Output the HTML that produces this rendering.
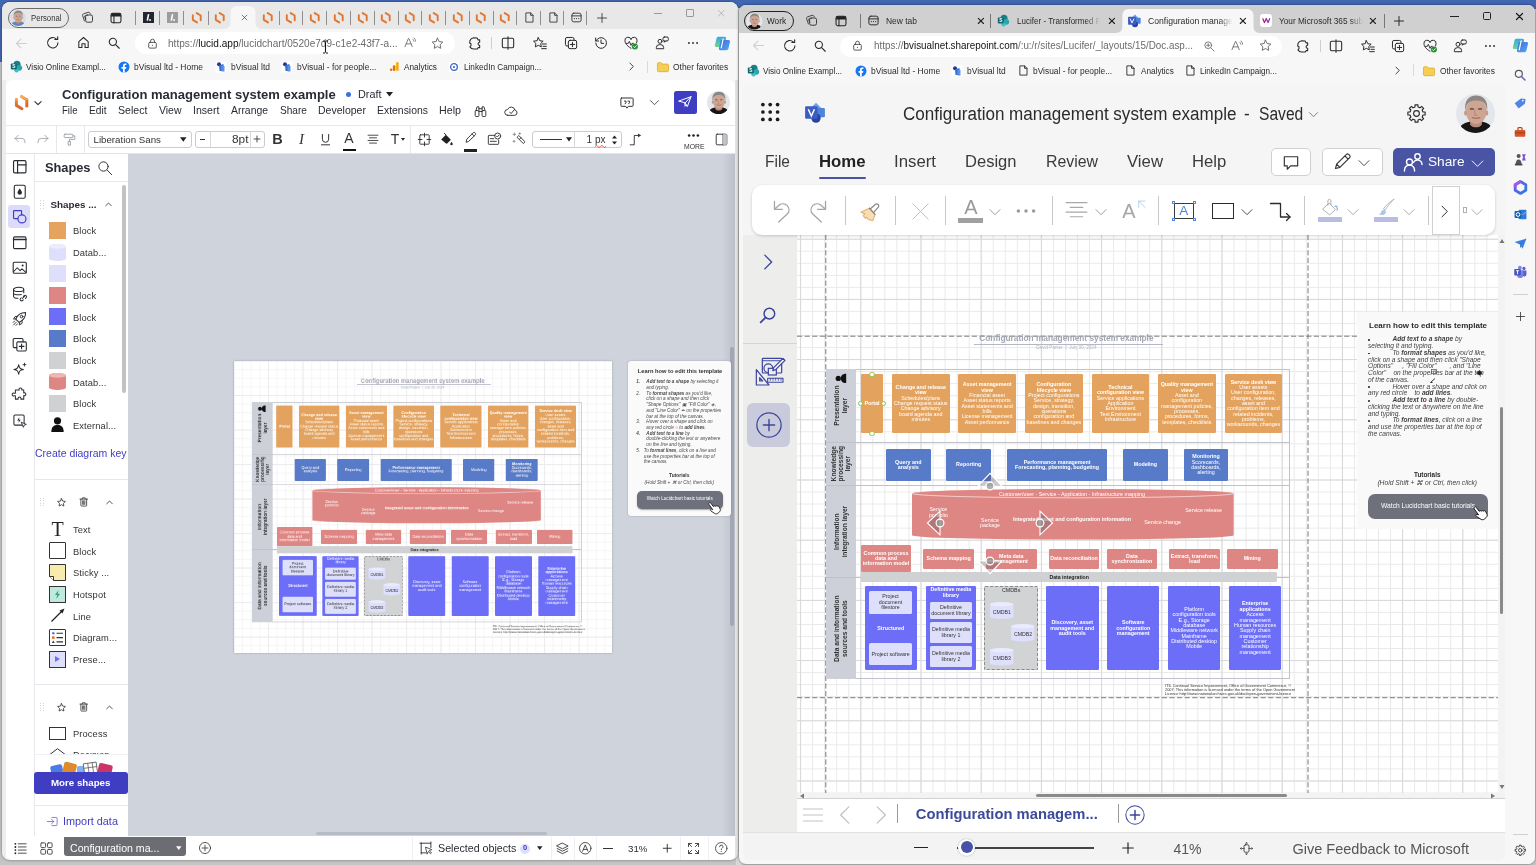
<!DOCTYPE html><html><head><meta charset="utf-8"><title>Configuration management system example</title><style>

html,body{margin:0;padding:0;}
body{width:1536px;height:865px;overflow:hidden;position:relative;background:#C5C5C5;will-change:transform;font-family:"Liberation Sans",sans-serif;}
div,svg,span.a{position:absolute;box-sizing:border-box;}
svg{overflow:visible;}
.w{position:absolute;overflow:hidden;}

</style></head><body>
<div style="left:0.00px;top:0.00px;width:1536.00px;height:9.00px;background:#4267B2;"></div>
<div style="left:0.00px;top:0.00px;width:3.00px;height:62.00px;background:#4267B2;"></div>
<div style="left:736.00px;top:8.00px;width:6.00px;height:860.00px;background:#D9D9D9;"></div>
<div class="w" style="left:2px;top:1.5px;width:736px;height:858.5px;border-radius:8px;background:#F7F7F7;box-shadow:0 0 3px rgba(0,0,0,.45);"><div style="left:-2px;top:-1.5px;width:1536px;height:865px;"><div style="left:0.00px;top:0.00px;width:740.00px;height:29.00px;background:#E8E8E8;"></div><div style="left:0.00px;top:29.00px;width:740.00px;height:51.00px;background:#F7F7F7;"></div><div class="w" style="left:6px;top:80px;width:729px;height:780px;border-radius:7px 7px 7px 7px;background:#fff;"><div style="left:-6px;top:-80px;width:1536px;height:865px;"><div style="left:128.00px;top:153.00px;width:610.00px;height:683.00px;background:#CFD3DC;"></div><div style="left:234.00px;top:360.50px;width:377.50px;height:292.00px;background:#fff;box-shadow:0 0 2px rgba(0,0,0,.25);background-image:linear-gradient(#ECECEE 1px,transparent 1px),linear-gradient(90deg,#ECECEE 1px,transparent 1px),linear-gradient(#F5F5F6 1px,transparent 1px),linear-gradient(90deg,#F5F5F6 1px,transparent 1px);background-size:34.52px 34.52px,34.52px 34.52px,8.63px 8.63px,8.63px 8.63px;background-position:-0.5px -0.5px;"></div><div style="left:251.9px;top:401.5px;width:0;height:0;transform:scale(0.7105);transform-origin:0 0;filter:blur(0.3px);"><div style="left:0;top:0;width:463.55px;height:309.90px;border:0.8px solid #C0C1CB;box-sizing:border-box;"></div><div style="left:0.00px;top:0.00px;width:29.35px;height:309.90px;background:#CDD0D8;"></div><div style="left:0.00px;top:72.50px;width:463.55px;height:0.80px;background:#C0C1CB;"></div><div style="left:0.00px;top:115.60px;width:463.55px;height:0.80px;background:#C0C1CB;"></div><div style="left:0.00px;top:207.40px;width:463.55px;height:0.80px;background:#C0C1CB;"></div><div style="left:-21.78px;top:21.78px;width:72.90px;height:29.35px;transform:rotate(-90deg);display:flex;align-items:center;justify-content:center;text-align:center;font-size:6.65px;line-height:7.2px;font-weight:bold;color:#333;">Presentation<br>layer</div><div style="left:-6.87px;top:79.78px;width:43.10px;height:29.35px;transform:rotate(-90deg);display:flex;align-items:center;justify-content:center;text-align:center;font-size:6.65px;line-height:7.2px;font-weight:bold;color:#333;">Knowledge<br>processing<br>layer</div><div style="left:-31.23px;top:147.23px;width:91.80px;height:29.35px;transform:rotate(-90deg);display:flex;align-items:center;justify-content:center;text-align:center;font-size:6.65px;line-height:7.2px;font-weight:bold;color:#333;">Information<br>integration layer</div><div style="left:-36.37px;top:244.18px;width:102.10px;height:29.35px;transform:rotate(-90deg);display:flex;align-items:center;justify-content:center;text-align:center;font-size:6.65px;line-height:7.2px;font-weight:bold;color:#333;">Data and information<br>sources and tools</div><svg style="left:9.35px;top:3.80px" width="9.6" height="10.8" viewBox="0 0 8 9"><g transform="rotate(-90 4 4.5)"><circle cx="4" cy="2.4" r="2.2" fill="#111"/><path d="M0.2,9 C0.2,5.5 2,4.6 4,4.6 C6,4.6 7.8,5.5 7.8,9 Z" fill="#111"/></g></svg><div style="left:34.35px;top:5.00px;width:22.70px;height:58.70px;background:#E3A35F;border-radius:1.2px;display:flex;flex-direction:column;justify-content:center;align-items:center;text-align:center;font-size:5.33px;line-height:5.36px;color:#fff;box-sizing:border-box;padding:0 0.5px;"><div style="position:static;font-weight:bold;">Portal</div></div><div style="left:65.65px;top:5.00px;width:57.70px;height:58.70px;background:#E3A35F;border-radius:1.2px;display:flex;flex-direction:column;justify-content:center;align-items:center;text-align:center;font-size:5.33px;line-height:5.36px;color:#fff;box-sizing:border-box;padding:0 0.5px;"><div style="position:static;font-weight:bold;">Change and release</div><div style="position:static;font-weight:bold;">view</div><div style="position:static;">Schedules/plans</div><div style="position:static;">Change request status</div><div style="position:static;">Change advisory</div><div style="position:static;">board agenda and</div><div style="position:static;">minutes</div></div><div style="left:132.05px;top:5.00px;width:57.70px;height:58.70px;background:#E3A35F;border-radius:1.2px;display:flex;flex-direction:column;justify-content:center;align-items:center;text-align:center;font-size:5.33px;line-height:5.36px;color:#fff;box-sizing:border-box;padding:0 0.5px;"><div style="position:static;font-weight:bold;">Asset management</div><div style="position:static;font-weight:bold;">view</div><div style="position:static;">Financial asset</div><div style="position:static;">Asset status reports</div><div style="position:static;">Asset statements and</div><div style="position:static;">bills</div><div style="position:static;">License management</div><div style="position:static;">Asset performance</div></div><div style="left:198.75px;top:5.00px;width:57.70px;height:58.70px;background:#E3A35F;border-radius:1.2px;display:flex;flex-direction:column;justify-content:center;align-items:center;text-align:center;font-size:5.33px;line-height:5.36px;color:#fff;box-sizing:border-box;padding:0 0.5px;"><div style="position:static;font-weight:bold;">Configuration</div><div style="position:static;font-weight:bold;">lifecycle view</div><div style="position:static;">Project configurations</div><div style="position:static;">Service, strategy,</div><div style="position:static;">design, transition,</div><div style="position:static;">operations</div><div style="position:static;">configuration and</div><div style="position:static;">baselines and changes</div></div><div style="left:265.35px;top:5.00px;width:57.70px;height:58.70px;background:#E3A35F;border-radius:1.2px;display:flex;flex-direction:column;justify-content:center;align-items:center;text-align:center;font-size:5.33px;line-height:5.36px;color:#fff;box-sizing:border-box;padding:0 0.5px;"><div style="position:static;font-weight:bold;">Technical</div><div style="position:static;font-weight:bold;">configuration view</div><div style="position:static;">Service applications</div><div style="position:static;">Application</div><div style="position:static;">Environment</div><div style="position:static;">Test Environment</div><div style="position:static;">Infrastructure</div></div><div style="left:331.75px;top:5.00px;width:57.70px;height:58.70px;background:#E3A35F;border-radius:1.2px;display:flex;flex-direction:column;justify-content:center;align-items:center;text-align:center;font-size:5.33px;line-height:5.36px;color:#fff;box-sizing:border-box;padding:0 0.5px;"><div style="position:static;font-weight:bold;">Quality management</div><div style="position:static;font-weight:bold;">view</div><div style="position:static;">Asset and</div><div style="position:static;">configuration</div><div style="position:static;">management policies,</div><div style="position:static;">processes,</div><div style="position:static;">procedures, forms,</div><div style="position:static;">templates, checklists</div></div><div style="left:398.35px;top:5.00px;width:57.70px;height:58.70px;background:#E3A35F;border-radius:1.2px;display:flex;flex-direction:column;justify-content:center;align-items:center;text-align:center;font-size:5.33px;line-height:5.36px;color:#fff;box-sizing:border-box;padding:0 0.5px;"><div style="position:static;font-weight:bold;">Service desk view</div><div style="position:static;">User assets</div><div style="position:static;">User configuration,</div><div style="position:static;">changes, releases,</div><div style="position:static;">asset and</div><div style="position:static;">configuration item and</div><div style="position:static;">related incidents,</div><div style="position:static;">problems,</div><div style="position:static;">workarounds, changes</div></div><div style="left:59.75px;top:79.60px;width:44.60px;height:31.80px;background:#577AC9;border-radius:1.2px;display:flex;flex-direction:column;justify-content:center;align-items:center;text-align:center;font-size:5.33px;line-height:5.36px;color:#fff;box-sizing:border-box;padding:0 0.5px;"><div style="position:static;">Query and</div><div style="position:static;">analysis</div></div><div style="left:120.05px;top:79.60px;width:44.80px;height:31.80px;background:#577AC9;border-radius:1.2px;display:flex;flex-direction:column;justify-content:center;align-items:center;text-align:center;font-size:5.33px;line-height:5.36px;color:#fff;box-sizing:border-box;padding:0 0.5px;"><div style="position:static;">Reporting</div></div><div style="left:180.75px;top:79.60px;width:100.20px;height:31.80px;background:#577AC9;border-radius:1.2px;display:flex;flex-direction:column;justify-content:center;align-items:center;text-align:center;font-size:5.33px;line-height:5.36px;color:#fff;box-sizing:border-box;padding:0 0.5px;"><div style="position:static;font-weight:bold;">Performance management</div><div style="position:static;">Forecasting, planning, budgeting</div></div><div style="left:296.85px;top:79.60px;width:44.60px;height:31.80px;background:#577AC9;border-radius:1.2px;display:flex;flex-direction:column;justify-content:center;align-items:center;text-align:center;font-size:5.33px;line-height:5.36px;color:#fff;box-sizing:border-box;padding:0 0.5px;"><div style="position:static;">Modeling</div></div><div style="left:357.45px;top:79.60px;width:44.60px;height:31.80px;background:#577AC9;border-radius:1.2px;display:flex;flex-direction:column;justify-content:center;align-items:center;text-align:center;font-size:5.33px;line-height:5.36px;color:#fff;box-sizing:border-box;padding:0 0.5px;"><div style="position:static;font-weight:bold;">Monitoring</div><div style="position:static;">Scorecards,</div><div style="position:static;">dashboards,</div><div style="position:static;">alerting</div></div><svg style="left:85.45px;top:119.70px" width="321.70" height="50.60" viewBox="0 0 321.70 50.60"><path d="M0,4.4 A160.85000000000002,4.4 0 0 1 321.70000000000005,4.4 L321.70000000000005,46.200000000000024 A160.85000000000002,4.4 0 0 1 0,46.200000000000024 Z" fill="#DE8683"/><path d="M0,4.4 A160.85000000000002,4.4 0 0 0 321.70000000000005,4.4" fill="none" stroke="#F7E1E0" stroke-width="0.8"/></svg><div style="left:145.75px;top:122.20px;width:200px;white-space:nowrap;text-align:center;font-size:5.33px;line-height:5.4px;color:#fff;">Customer/user - Service - Application - Infrastructure mapping</div><div style="left:12.15px;top:138.00px;width:200px;white-space:nowrap;text-align:center;font-size:5.33px;line-height:5.4px;color:#fff;">Service<br>portfolio</div><div style="left:63.75px;top:148.60px;width:200px;white-space:nowrap;text-align:center;font-size:5.33px;line-height:5.4px;color:#fff;">Service<br>package</div><div style="left:145.75px;top:147.40px;width:200px;white-space:nowrap;text-align:center;font-size:5.33px;line-height:5.4px;color:#fff;font-weight:bold;">Integrated asset and configuration information</div><div style="left:277.25px;top:138.50px;width:200px;white-space:nowrap;text-align:center;font-size:5.33px;line-height:5.4px;color:#fff;">Service release</div><div style="left:236.25px;top:150.90px;width:200px;white-space:nowrap;text-align:center;font-size:5.33px;line-height:5.4px;color:#fff;">Service change</div><div style="left:34.65px;top:175.60px;width:50.30px;height:27.40px;background:#DE8683;border-radius:1.2px;display:flex;flex-direction:column;justify-content:center;align-items:center;text-align:center;font-size:5.33px;line-height:5.36px;color:#fff;box-sizing:border-box;padding:0 0.5px;"><div style="position:static;">Common process</div><div style="position:static;">data and</div><div style="position:static;">information model</div></div><div style="left:96.85px;top:179.60px;width:51.10px;height:20.20px;background:#DE8683;border-radius:1.2px;display:flex;flex-direction:column;justify-content:center;align-items:center;text-align:center;font-size:5.33px;line-height:5.36px;color:#fff;box-sizing:border-box;padding:0 0.5px;"><div style="position:static;">Schema mapping</div></div><div style="left:159.65px;top:179.60px;width:50.80px;height:20.20px;background:#DE8683;border-radius:1.2px;display:flex;flex-direction:column;justify-content:center;align-items:center;text-align:center;font-size:5.33px;line-height:5.36px;color:#fff;box-sizing:border-box;padding:0 0.5px;"><div style="position:static;">Meta data</div><div style="position:static;">management</div></div><div style="left:222.45px;top:179.60px;width:50.60px;height:20.20px;background:#DE8683;border-radius:1.2px;display:flex;flex-direction:column;justify-content:center;align-items:center;text-align:center;font-size:5.33px;line-height:5.36px;color:#fff;box-sizing:border-box;padding:0 0.5px;"><div style="position:static;">Data reconciliation</div></div><div style="left:280.25px;top:179.60px;width:50.80px;height:20.20px;background:#DE8683;border-radius:1.2px;display:flex;flex-direction:column;justify-content:center;align-items:center;text-align:center;font-size:5.33px;line-height:5.36px;color:#fff;box-sizing:border-box;padding:0 0.5px;"><div style="position:static;">Data</div><div style="position:static;">synchronization</div></div><div style="left:342.75px;top:179.60px;width:51.00px;height:20.20px;background:#DE8683;border-radius:1.2px;display:flex;flex-direction:column;justify-content:center;align-items:center;text-align:center;font-size:5.33px;line-height:5.36px;color:#fff;box-sizing:border-box;padding:0 0.5px;"><div style="position:static;">Extract, transform,</div><div style="position:static;">load</div></div><div style="left:400.75px;top:179.60px;width:50.50px;height:20.20px;background:#DE8683;border-radius:1.2px;display:flex;flex-direction:column;justify-content:center;align-items:center;text-align:center;font-size:5.33px;line-height:5.36px;color:#fff;box-sizing:border-box;padding:0 0.5px;"><div style="position:static;">Mining</div></div><div style="left:34.65px;top:203.00px;width:416.60px;height:9.80px;background:#D0D1D3;border-radius:1.2px;display:flex;flex-direction:column;justify-content:center;align-items:center;text-align:center;font-size:5.2px;line-height:6px;color:#222;box-sizing:border-box;padding:0 0.5px;"><div style="position:static;font-weight:bold;">Data integration</div></div><div style="left:38.35px;top:217.10px;width:52.40px;height:83.50px;background:#6C6EF7;border-radius:1.2px;display:flex;flex-direction:column;justify-content:center;align-items:center;text-align:center;font-size:5.33px;line-height:5.36px;color:#fff;box-sizing:border-box;padding:0 0.5px;"><div style="position:static;font-weight:bold;">Structured</div></div><div style="left:42.75px;top:221.60px;width:43.00px;height:22.60px;background:#DEDFFB;border-radius:1.5px;display:flex;flex-direction:column;justify-content:center;align-items:center;text-align:center;font-size:5.33px;line-height:5.36px;color:#333;box-sizing:border-box;padding:0 0.5px;"><div style="position:static;">Project</div><div style="position:static;">document</div><div style="position:static;">filestore</div></div><div style="left:42.75px;top:273.60px;width:43.00px;height:22.50px;background:#DEDFFB;border-radius:1.5px;display:flex;flex-direction:column;justify-content:center;align-items:center;text-align:center;font-size:5.33px;line-height:5.36px;color:#333;box-sizing:border-box;padding:0 0.5px;"><div style="position:static;">Project software</div></div><div style="left:99.25px;top:217.10px;width:50.80px;height:83.50px;background:#6C6EF7;border-radius:1.2px;display:flex;flex-direction:column;justify-content:center;align-items:center;text-align:center;font-size:5.33px;line-height:5.36px;color:#fff;box-sizing:border-box;padding:0 0.5px;justify-content:flex-start;padding-top:0.8px;"><div style="position:static;">Definitive media</div><div style="position:static;">library</div></div><div style="left:103.25px;top:233.00px;width:42.80px;height:16.60px;background:#DEDFFB;border-radius:1.5px;display:flex;flex-direction:column;justify-content:center;align-items:center;text-align:center;font-size:5.33px;line-height:5.36px;color:#333;box-sizing:border-box;padding:0 0.5px;"><div style="position:static;">Definitive</div><div style="position:static;">document library</div></div><div style="left:103.25px;top:252.60px;width:42.80px;height:21.40px;background:#DEDFFB;border-radius:1.5px;display:flex;flex-direction:column;justify-content:center;align-items:center;text-align:center;font-size:5.33px;line-height:5.36px;color:#333;box-sizing:border-box;padding:0 0.5px;"><div style="position:static;">Definitive media</div><div style="position:static;">library 1</div></div><div style="left:103.25px;top:276.60px;width:42.80px;height:21.30px;background:#DEDFFB;border-radius:1.5px;display:flex;flex-direction:column;justify-content:center;align-items:center;text-align:center;font-size:5.33px;line-height:5.36px;color:#333;box-sizing:border-box;padding:0 0.5px;"><div style="position:static;">Definitive media</div><div style="position:static;">library 2</div></div><div style="left:158.05px;top:217.10px;width:53.70px;height:83.50px;background:#D2D3D5;border-radius:1.2px;display:flex;flex-direction:column;justify-content:center;align-items:center;text-align:center;font-size:5.33px;line-height:5.36px;color:#333;box-sizing:border-box;padding:0 0.5px;justify-content:flex-start;padding-top:0.8px;border:0.7px dashed #8a8a8a;"><div style="position:static;">CMDBs</div></div><svg style="left:163.75px;top:232.60px" width="23.50" height="17.00" viewBox="0 0 23.50 17.00"><path d="M0,2.2 A11.75,2.2 0 0 1 23.5,2.2 L23.5,14.8 A11.75,2.2 0 0 1 0,14.8 Z" fill="#DEDFFB"/><ellipse cx="11.75" cy="2.2" rx="11.75" ry="2.2" fill="#EBEBFD"/></svg><div style="left:163.75px;top:234.10px;width:23.50px;height:17.00px;display:flex;align-items:center;justify-content:center;font-size:5.2px;color:#333;">CMDB1</div><svg style="left:185.15px;top:254.60px" width="23.40" height="17.50" viewBox="0 0 23.40 17.50"><path d="M0,2.2 A11.699999999999989,2.2 0 0 1 23.399999999999977,2.2 L23.399999999999977,15.3 A11.699999999999989,2.2 0 0 1 0,15.3 Z" fill="#DEDFFB"/><ellipse cx="11.699999999999989" cy="2.2" rx="11.699999999999989" ry="2.2" fill="#EBEBFD"/></svg><div style="left:185.15px;top:256.10px;width:23.40px;height:17.50px;display:flex;align-items:center;justify-content:center;font-size:5.2px;color:#333;">CMDB2</div><svg style="left:163.75px;top:278.60px" width="23.50" height="17.50" viewBox="0 0 23.50 17.50"><path d="M0,2.2 A11.75,2.2 0 0 1 23.5,2.2 L23.5,15.3 A11.75,2.2 0 0 1 0,15.3 Z" fill="#DEDFFB"/><ellipse cx="11.75" cy="2.2" rx="11.75" ry="2.2" fill="#EBEBFD"/></svg><div style="left:163.75px;top:280.10px;width:23.50px;height:17.50px;display:flex;align-items:center;justify-content:center;font-size:5.2px;color:#333;">CMDB3</div><div style="left:219.75px;top:217.10px;width:52.50px;height:83.50px;background:#6C6EF7;border-radius:1.2px;display:flex;flex-direction:column;justify-content:center;align-items:center;text-align:center;font-size:5.33px;line-height:5.36px;color:#fff;box-sizing:border-box;padding:0 0.5px;"><div style="position:static;">Discovery, asset</div><div style="position:static;">management and</div><div style="position:static;">audit tools</div></div><div style="left:280.75px;top:217.10px;width:52.40px;height:83.50px;background:#6C6EF7;border-radius:1.2px;display:flex;flex-direction:column;justify-content:center;align-items:center;text-align:center;font-size:5.33px;line-height:5.36px;color:#fff;box-sizing:border-box;padding:0 0.5px;"><div style="position:static;">Software</div><div style="position:static;">configuration</div><div style="position:static;">management</div></div><div style="left:341.75px;top:217.10px;width:52.30px;height:83.50px;background:#6C6EF7;border-radius:1.2px;display:flex;flex-direction:column;justify-content:center;align-items:center;text-align:center;font-size:5.33px;line-height:5.36px;color:#fff;box-sizing:border-box;padding:0 0.5px;"><div style="position:static;">Platform</div><div style="position:static;">configuration tools</div><div style="position:static;">E.g., Storage</div><div style="position:static;">database</div><div style="position:static;">Middleware network</div><div style="position:static;">Mainframe</div><div style="position:static;">Distributed desktop</div><div style="position:static;">Mobile</div></div><div style="left:402.55px;top:217.10px;width:52.70px;height:83.50px;background:#6C6EF7;border-radius:1.2px;display:flex;flex-direction:column;justify-content:center;align-items:center;text-align:center;font-size:5.33px;line-height:5.36px;color:#fff;box-sizing:border-box;padding:0 0.5px;"><div style="position:static;font-weight:bold;">Enterprise</div><div style="position:static;font-weight:bold;">applications</div><div style="position:static;">Access</div><div style="position:static;">management</div><div style="position:static;">Human resources</div><div style="position:static;">Supply chain</div><div style="position:static;">management</div><div style="position:static;">Customer</div><div style="position:static;">relationship</div><div style="position:static;">management</div></div><div style="left:338.75px;top:314.20px;font-size:3.9px;line-height:4.1px;color:#333;white-space:nowrap;">ITIL Continual Service Improvement, Office of Government Commerce, &copy;<br>2007. This information is licensed under the terms of the Open Government<br>Licence http://www.nationalarchives.gov.uk/doc/open-government-licence</div><div style="left:140.15px;top:-34.90px;width:200px;text-align:center;font-size:8.3px;line-height:10px;font-weight:bold;color:#A3A6B3;white-space:nowrap;">Configuration management system example</div><div style="left:147.65px;top:-25.30px;width:188.80px;height:0.80px;background:#B4B7C4;"></div><div style="left:140.15px;top:-23.00px;width:200px;text-align:center;font-size:4.6px;line-height:5px;color:#B3B6C0;white-space:nowrap;">David Parker &nbsp;|&nbsp; July 30, 2024</div></div><div style="left:722.00px;top:154.00px;width:13.00px;height:682.00px;background:linear-gradient(90deg,rgba(120,125,140,0),rgba(120,125,140,.22));"></div><div style="left:730.20px;top:347.00px;width:4.20px;height:279.00px;background:#A3A7B3;border-radius:2.1px;"></div><div style="left:316.00px;top:831.80px;width:231.00px;height:3.00px;background:#B7BBC5;border-radius:1.5px;"></div><div style="left:628.00px;top:360.50px;width:102.50px;height:155.50px;background:#FAFAFA;border-radius:3px;box-shadow:0 0 2px rgba(0,0,0,.25);"></div><div style="left:6.00px;top:125.00px;width:729.00px;height:1.00px;background:#E6E8EC;"></div><div style="left:6.00px;top:153.00px;width:729.00px;height:1.00px;background:#E1E4EA;"></div><div style="left:6.00px;top:154.00px;width:28.00px;height:682.00px;background:#fff;"></div><div style="left:34.00px;top:154.00px;width:94.00px;height:682.00px;background:#fff;"></div><div style="left:34.00px;top:154.00px;width:1.00px;height:682.00px;background:#E6E8EC;"></div><div style="left:6.00px;top:836.00px;width:729.00px;height:24.00px;background:#fff;"></div><svg style="left:14.40px;top:95.10px;" width="15.2" height="15.2" viewBox="0 0 24 24"><defs><linearGradient id="lg1" x1="0" y1="0" x2="0" y2="1"><stop offset="0" stop-color="#F2A652"/><stop offset="0.35" stop-color="#E27A30"/><stop offset="1" stop-color="#D8672A"/></linearGradient></defs><path d="M3.8,6.8V16.4L12.5,21.7" fill="none" stroke="url(#lg1)" stroke-width="4.8" stroke-linecap="round" stroke-linejoin="round"/><path d="M11.9,2.3L20.25,7.4V17.3" fill="none" stroke="url(#lg1)" stroke-width="4.8" stroke-linecap="round" stroke-linejoin="round"/><path d="M11.9,2.3L20.25,7.4" fill="none" stroke="#F4B466" stroke-width="2" stroke-linecap="round"/></svg><svg style="left:32.60px;top:98.00px;" width="10" height="10" viewBox="0 0 24 24"><path d="M4.5,8.5L12,16l7.5-7.5" fill="none" stroke="#2b2b2b" stroke-width="2.5" stroke-linecap="round" stroke-linejoin="round"/></svg><div style="left:62.00px;top:86.80px;font-size:13.04px;line-height:15.00px;color:#282C33;white-space:nowrap;font-weight:bold;">Configuration management system example</div><div style="left:345.50px;top:91.50px;width:5.50px;height:5.50px;background:#3C6FD9;border-radius:50%;"></div><div style="left:357.50px;top:89.02px;font-size:10.40px;line-height:11.96px;color:#282C33;white-space:nowrap;transform:scaleX(1.0427);transform-origin:0 50%;">Draft</div><svg style="left:385.5px;top:92px" width="7" height="5" viewBox="0 0 7 5"><path d="M0,0H7L3.5,4.6Z" fill="#222"/></svg><div style="left:62.00px;top:105.32px;font-size:10.40px;line-height:11.96px;color:#282C33;white-space:nowrap;transform:scaleX(0.9249);transform-origin:0 50%;">File</div><div style="left:89.00px;top:105.32px;font-size:10.40px;line-height:11.96px;color:#282C33;white-space:nowrap;transform:scaleX(0.9765);transform-origin:0 50%;">Edit</div><div style="left:118.00px;top:105.32px;font-size:10.40px;line-height:11.96px;color:#282C33;white-space:nowrap;transform:scaleX(1.0206);transform-origin:0 50%;">Select</div><div style="left:159.00px;top:105.32px;font-size:10.40px;line-height:11.96px;color:#282C33;white-space:nowrap;transform:scaleX(1.0065);transform-origin:0 50%;">View</div><div style="left:192.50px;top:105.32px;font-size:10.40px;line-height:11.96px;color:#282C33;white-space:nowrap;transform:scaleX(1.0188);transform-origin:0 50%;">Insert</div><div style="left:231.00px;top:105.32px;font-size:10.40px;line-height:11.96px;color:#282C33;white-space:nowrap;transform:scaleX(1.0000);transform-origin:0 50%;">Arrange</div><div style="left:279.50px;top:105.32px;font-size:10.40px;line-height:11.96px;color:#282C33;white-space:nowrap;transform:scaleX(0.9729);transform-origin:0 50%;">Share</div><div style="left:317.50px;top:105.32px;font-size:10.40px;line-height:11.96px;color:#282C33;white-space:nowrap;transform:scaleX(1.0125);transform-origin:0 50%;">Developer</div><div style="left:376.50px;top:105.32px;font-size:10.40px;line-height:11.96px;color:#282C33;white-space:nowrap;transform:scaleX(1.0025);transform-origin:0 50%;">Extensions</div><div style="left:438.50px;top:105.32px;font-size:10.40px;line-height:11.96px;color:#282C33;white-space:nowrap;transform:scaleX(1.0285);transform-origin:0 50%;">Help</div><svg style="left:472.50px;top:103.50px;" width="15" height="15" viewBox="0 0 24 24"><path d="M5,9.5L6.5,4.5h3v6M19,9.5L17.5,4.5h-3v6M9.5,7.5h5M9.5,12h5" fill="none" stroke="#333" stroke-width="1.5" stroke-linecap="round" stroke-linejoin="round"/><rect x="3.5" y="10.5" width="6" height="9.5" rx="1.5" fill="none" stroke="#333" stroke-width="1.5" stroke-linecap="round" stroke-linejoin="round"/><rect x="14.5" y="10.5" width="6" height="9.5" rx="1.5" fill="none" stroke="#333" stroke-width="1.5" stroke-linecap="round" stroke-linejoin="round"/></svg><svg style="left:502.50px;top:103.00px;" width="16" height="16" viewBox="0 0 24 24"><path d="M7,18.5h10.5a3.8,3.8 0 0 0 0.6,-7.5A5.8,5.8 0 0 0 7,9.7 4.4,4.4 0 0 0 7,18.5Z" fill="none" stroke="#333" stroke-width="1.4" stroke-linecap="round" stroke-linejoin="round"/><path d="M9.8,13.5l2.3,2.3 5.4-6.3" fill="none" stroke="#333" stroke-width="1.4" stroke-linecap="round" stroke-linejoin="round"/></svg><svg style="left:618.50px;top:94.50px;" width="16" height="16" viewBox="0 0 24 24"><path d="M4,4.5h16a1.2,1.2 0 0 1 1.2,1.2v10.1a1.2,1.2 0 0 1 -1.2,1.2H14l-2,2.7 -2,-2.7H4a1.2,1.2 0 0 1 -1.2,-1.2V5.7A1.2,1.2 0 0 1 4,4.5Z" fill="none" stroke="#333" stroke-width="1.5" stroke-linecap="round" stroke-linejoin="round"/><path d="M8.2,9.2h2.3v2.3l-1.3,1.7M13.5,9.2h2.3v2.3l-1.3,1.7" fill="none" stroke="#333" stroke-width="1.5" stroke-linecap="round" stroke-linejoin="round"/></svg><svg style="left:648.00px;top:96.00px;" width="13" height="13" viewBox="0 0 24 24"><path d="M4.5,8.5L12,16l7.5-7.5" fill="none" stroke="#333" stroke-width="1.5" stroke-linecap="round" stroke-linejoin="round"/></svg><div style="left:674.00px;top:91.00px;width:22.50px;height:22.50px;background:#3F3DC2;border-radius:2.5px;"></div><svg style="left:677.30px;top:94.30px;" width="16" height="16" viewBox="0 0 24 24"><path d="M3,10.5L21,4 15.5,19 12,13.5Z M12,13.5L21,4 M12,13.5V18.5l2-2.2" fill="none" stroke="#fff" stroke-width="1.5" stroke-linecap="round" stroke-linejoin="round"/></svg><svg style="left:707.00px;top:90.80px" width="23.0" height="23.0" viewBox="0 0 40 40"><defs><clipPath id="av718_102"><circle cx="20" cy="20" r="20"/></clipPath><filter id="ab718_102" x="-10%" y="-10%" width="120%" height="120%"><feGaussianBlur stdDeviation="0.55"/></filter></defs><g clip-path="url(#av718_102)"><rect width="40" height="40" fill="#E3E6EC"/><g filter="url(#ab718_102)"><path d="M1,44C2,33 7,29.500 14,28.500L27,28.500C34,29.500 38,33 39,44Z" fill="#141414"/><path d="M14.500,25h12v6.500c-2,3.500-10,3.500-12,0Z" fill="#B98B78"/><ellipse cx="20.700" cy="17.800" rx="10.600" ry="13" fill="#CDA592"/><ellipse cx="9.800" cy="19.500" rx="1.500" ry="2.600" fill="#C39A87"/><ellipse cx="31.600" cy="19.500" rx="1.500" ry="2.600" fill="#C39A87"/><path d="M9.600,18C8,7 13,1.500 20.700,1.500S33.500,7 31.800,18C31.500,11.500 29,8 25,7.200 22,6.600 19,6.600 16.500,7.200 12.500,8 10,11.500 9.600,18Z" fill="#8C8782"/><ellipse cx="16.300" cy="15.300" rx="2.300" ry="0.900" fill="#6B5147"/><ellipse cx="24.700" cy="15.300" rx="2.300" ry="0.900" fill="#6B5147"/><path d="M19.300,16v5.500q1.300,0.800 2.600,0" fill="none" stroke="#B48A78" stroke-width="1.100"/><path d="M16.800,24.300q3.800,1.400 7.600,0" fill="none" stroke="#A86F68" stroke-width="1.300" stroke-linecap="round"/><path d="M12.500,24q1.500,6.500 8.200,7 6.700,-0.500 8.200,-7 -1.500,8.500 -8.200,9 -6.700,-0.500 -8.200,-9Z" fill="#B89380" opacity=".6"/></g></g></svg><svg style="left:12.50px;top:132.30px;" width="14" height="14" viewBox="0 0 24 24"><path d="M9,5.5L3.5,11l5.5,5.5M3.5,11H15a5.5,5.5 0 0 1 5.5,5.5v2" fill="none" stroke="#9aa0a8" stroke-width="1.5" stroke-linecap="round" stroke-linejoin="round"/></svg><svg style="left:36.00px;top:132.30px;" width="14" height="14" viewBox="0 0 24 24"><path d="M15,5.5L20.5,11 15,16.5M20.500,11H9A5.5,5.5 0 0 0 3.5,16.500v2" fill="none" stroke="#9aa0a8" stroke-width="1.5" stroke-linecap="round" stroke-linejoin="round"/></svg><div style="left:56.00px;top:126.00px;width:1.00px;height:27.00px;background:#E6E8EC;"></div><svg style="left:62.00px;top:131.80px;" width="15" height="15" viewBox="0 0 24 24"><rect x="3.500" y="3.5" width="14" height="5.500" rx="1.500" fill="none" stroke="#9aa0a8" stroke-width="1.5" stroke-linecap="round" stroke-linejoin="round"/><path d="M17.5,6.2h3v5.600h-8.500V15M10.5,15h3v6h-3Z" fill="none" stroke="#9aa0a8" stroke-width="1.5" stroke-linecap="round" stroke-linejoin="round"/></svg><div style="left:84.00px;top:126.00px;width:1.00px;height:27.00px;background:#E6E8EC;"></div><div style="left:87.50px;top:130.50px;width:104.00px;height:17.50px;background:#fff;border:1px solid #C9CCD1;border-radius:3px;"></div><div style="left:93.50px;top:133.72px;font-size:9.71px;line-height:11.17px;color:#333;white-space:nowrap;">Liberation Sans</div><svg style="left:180px;top:137px" width="6.500" height="5" viewBox="0 0 7 5"><path d="M0,0H7L3.5,4.8Z" fill="#222"/></svg><div style="left:195.00px;top:130.50px;width:69.50px;height:17.50px;background:#fff;border:1px solid #C9CCD1;border-radius:3px;"></div><div style="left:209.50px;top:131.00px;width:1.00px;height:16.50px;background:#D5D8DC;"></div><div style="left:250.00px;top:131.00px;width:1.00px;height:16.50px;background:#D5D8DC;"></div><div style="left:199.50px;top:138.80px;width:5.00px;height:1.40px;background:#333;"></div><div style="left:231.50px;top:133.72px;font-size:10.40px;line-height:11.96px;color:#333;white-space:nowrap;transform:scaleX(1.1413);transform-origin:0 50%;">8pt</div><svg style="left:253.30px;top:135.30px;" width="8" height="8" viewBox="0 0 24 24"><path d="M12,3V21M3,12H21" fill="none" stroke="#333" stroke-width="2.6" stroke-linecap="round" stroke-linejoin="round"/></svg><div style="left:272.00px;top:130.96px;font-size:14.50px;line-height:16.67px;color:#333;white-space:nowrap;font-weight:bold;width:11.00px;text-align:center;">B</div><div style="left:296.00px;top:130.96px;font-size:14.50px;line-height:16.67px;color:#333;white-space:nowrap;font-style:italic;width:11.00px;text-align:center;font-family:'Liberation Serif',serif;font-size:15px;">I</div><svg style="left:317.50px;top:131.80px;" width="15" height="15" viewBox="0 0 24 24"><path d="M7,4v7.500a5,5 0 0 0 10,0V4M5.5,20.500h13" fill="none" stroke="#333" stroke-width="1.6" stroke-linecap="round" stroke-linejoin="round"/></svg><div style="left:343.00px;top:129.75px;font-size:14.00px;line-height:16.10px;color:#333;white-space:nowrap;width:12.00px;text-align:center;">A</div><div style="left:343.00px;top:148.50px;width:12.50px;height:2.50px;background:#111;"></div><svg style="left:365.50px;top:132.30px;" width="14" height="14" viewBox="0 0 24 24"><path d="M3.500,5.500h17M6,10h12M3.500,14.500h17M6,19h12" fill="none" stroke="#333" stroke-width="1.5" stroke-linecap="round" stroke-linejoin="round"/></svg><div style="left:390.00px;top:131.25px;font-size:14.00px;line-height:16.10px;color:#333;white-space:nowrap;width:10.00px;text-align:center;">T</div><svg style="left:400.5px;top:138px" width="4" height="3" viewBox="0 0 4 3"><path d="M0,0H4L2,2.800Z" fill="#222"/></svg><div style="left:410.00px;top:126.00px;width:1.00px;height:27.00px;background:#E6E8EC;"></div><svg style="left:416.50px;top:131.80px;" width="15" height="15" viewBox="0 0 24 24"><rect x="4.500" y="4.500" width="15" height="15" rx="1" fill="none" stroke="#333" stroke-width="1.5" stroke-linecap="round" stroke-linejoin="round"/><path d="M12,2v6M12,16v6M2,12h6M16,12h6" fill="none" stroke="#333" stroke-width="1.5" stroke-linecap="round" stroke-linejoin="round"/></svg><svg style="left:439.00px;top:131.80px;" width="15" height="15" viewBox="0 0 24 24"><path d="M3.500,12L11,4.500l8,8-5.500,5.500a2,2 0 0 1 -2.800,0L3.500,12Z" fill="#222"/><path d="M11,4.500L8.500,2" fill="none" stroke="#222" stroke-width="1.5" stroke-linecap="round" stroke-linejoin="round"/><path d="M20,15.500c1.500,2.200 2,3 2,3.800a2,2 0 0 1 -4,0c0-0.800 0.500-1.600 2-3.800Z" fill="#222"/></svg><svg style="left:463.00px;top:129.80px;" width="15" height="15" viewBox="0 0 24 24"><path d="M5,19l1.200-4.500L16.500,4.200a1.700,1.700 0 0 1 2.400,0l1,1a1.700,1.700 0 0 1 0,2.400L9.500,17.800Z M14.500,6.200l3.400,3.400" fill="none" stroke="#333" stroke-width="1.5" stroke-linecap="round" stroke-linejoin="round"/></svg><div style="left:464.00px;top:149.00px;width:13.00px;height:2.50px;background:#222;"></div><svg style="left:486.00px;top:131.30px;" width="16" height="16" viewBox="0 0 24 24"><path d="M13,6.500H4.500a1,1 0 0 0 -1,1V19a1,1 0 0 0 1,1H18a1,1 0 0 0 1,-1v-5.500M6.500,11.500h5M6.500,15.500h9" fill="none" stroke="#333" stroke-width="1.4" stroke-linecap="round" stroke-linejoin="round"/><circle cx="17.500" cy="7.500" r="4.500" fill="none" stroke="#333" stroke-width="1.4" stroke-linecap="round" stroke-linejoin="round"/><path d="M15.500,7.600l1.400,1.400 2.500-2.800" fill="none" stroke="#333" stroke-width="1.3" stroke-linecap="round" stroke-linejoin="round"/></svg><svg style="left:510.50px;top:131.30px;" width="16" height="16" viewBox="0 0 24 24"><path d="M9.500,9l2.200-2.200L21,16.200 18.800,18.400Z M12.800,12.300l2.200-2.200" fill="none" stroke="#333" stroke-width="1.4" stroke-linecap="round" stroke-linejoin="round"/><path d="M5,3v4M3,5h4M4.500,14v3M3,15.500h3M13,2.500v2.500M11.800,3.800h2.500" fill="none" stroke="#777" stroke-width="1.1" stroke-linecap="round" stroke-linejoin="round"/></svg><div style="left:532.00px;top:130.50px;width:90.00px;height:17.50px;background:#fff;border:1px solid #C9CCD1;border-radius:3px;"></div><div style="left:540.00px;top:138.70px;width:22.00px;height:1.30px;background:#333;"></div><svg style="left:565.5px;top:137px" width="6" height="5" viewBox="0 0 7 5"><path d="M0,0H7L3.500,4.800Z" fill="#222"/></svg><div style="left:573.50px;top:131.00px;width:1.00px;height:16.50px;background:#D5D8DC;"></div><div style="left:586.50px;top:133.52px;font-size:10.05px;line-height:11.56px;color:#333;white-space:nowrap;">1 px</div><svg style="left:595px;top:144.500px" width="11" height="3" viewBox="0 0 11 3"><path d="M0,1.500q1.400,-2 2.750,0t2.750,0 2.750,0 2.750,0" stroke="#D33" stroke-width="0.800" fill="none"/></svg><svg style="left:611.5px;top:134.500px" width="5" height="10" viewBox="0 0 5 10"><path d="M0,3.600L2.500,0.500 5,3.600ZM0,6.400L2.500,9.500 5,6.400Z" fill="#222"/></svg><svg style="left:627.50px;top:131.80px;" width="15" height="15" viewBox="0 0 24 24"><path d="M3.500,20.500h6.500V5.500h7" fill="none" stroke="#333" stroke-width="1.5" stroke-linecap="round" stroke-linejoin="round"/><path d="M16,2.500l5,3 -5,3Z" fill="#333"/></svg><svg style="left:686.20px;top:128.30px;" width="15" height="15" viewBox="0 0 24 24"><circle cx="5" cy="12" r="2.1" fill="#222"/><circle cx="12" cy="12" r="2.1" fill="#222"/><circle cx="19" cy="12" r="2.1" fill="#222"/></svg><div style="left:683.50px;top:143.26px;font-size:7.20px;line-height:8.28px;color:#333;white-space:nowrap;transform:scaleX(0.9490);transform-origin:0 50%;">MORE</div><svg style="left:714.00px;top:131.80px;" width="15" height="15" viewBox="0 0 24 24"><rect x="3.500" y="3.500" width="17" height="17" rx="1.500" fill="none" stroke="#333" stroke-width="1.5" stroke-linecap="round" stroke-linejoin="round"/><path d="M14.500,3.500V20.500" fill="none" stroke="#333" stroke-width="1.5" stroke-linecap="round" stroke-linejoin="round"/><rect x="14.500" y="3.500" width="6" height="17" fill="#BFC3CA"/></svg><svg style="left:10.55px;top:158.25px;" width="17.5" height="17.5" viewBox="0 0 24 24"><rect x="3.500" y="3.500" width="17" height="17" rx="1.500" fill="none" stroke="#282C33" stroke-width="1.6" stroke-linecap="round" stroke-linejoin="round"/><path d="M9,3.500V20.500M9,9.500H20.500" fill="none" stroke="#282C33" stroke-width="1.6" stroke-linecap="round" stroke-linejoin="round"/></svg><svg style="left:10.55px;top:183.25px;" width="17.5" height="17.5" viewBox="0 0 24 24"><rect x="4.500" y="3" width="15" height="18" rx="2" fill="none" stroke="#282C33" stroke-width="1.5" stroke-linecap="round" stroke-linejoin="round"/><path d="M12,7.500c2,2.700 3,4.200 3,5.500a3,3 0 0 1 -6,0c0-1.300 1-2.800 3-5.500Z" fill="#282C33"/></svg><div style="left:8.30px;top:205.00px;width:22.00px;height:23.00px;background:#DCDCFA;border-radius:3px;"></div><svg style="left:10.55px;top:207.75px;" width="17.5" height="17.5" viewBox="0 0 24 24"><rect x="3.500" y="3.500" width="11" height="11" rx="1" fill="none" stroke="#3F3DC2" stroke-width="1.6" stroke-linecap="round" stroke-linejoin="round"/><circle cx="15" cy="15" r="5.500" fill="#DCDCFA" stroke="#3F3DC2" stroke-width="1.600"/></svg><svg style="left:10.55px;top:233.75px;" width="17.5" height="17.5" viewBox="0 0 24 24"><rect x="3.500" y="4" width="17" height="16" rx="1.500" fill="none" stroke="#282C33" stroke-width="1.5" stroke-linecap="round" stroke-linejoin="round"/><path d="M3.500,7.500H20.500" fill="none" stroke="#282C33" stroke-width="2.2" stroke-linecap="round" stroke-linejoin="round"/></svg><svg style="left:10.55px;top:259.25px;" width="17.5" height="17.5" viewBox="0 0 24 24"><rect x="3" y="4.500" width="18" height="15" rx="1.500" fill="none" stroke="#282C33" stroke-width="1.5" stroke-linecap="round" stroke-linejoin="round"/><path d="M3.500,17.500l5-5.500 4,4 2.500-2.500 5.500,5" fill="none" stroke="#282C33" stroke-width="1.4" stroke-linecap="round" stroke-linejoin="round"/><circle cx="16" cy="9" r="1.400" fill="#282C33"/></svg><svg style="left:10.55px;top:284.75px;" width="17.5" height="17.5" viewBox="0 0 24 24"><ellipse cx="10.500" cy="6" rx="7" ry="2.800" fill="none" stroke="#282C33" stroke-width="1.4" stroke-linecap="round" stroke-linejoin="round"/><path d="M3.500,6v9.500c0,1.500 2.500,2.800 6,2.800M17.500,6v4.500M3.500,10.800c0,1.500 3,2.700 7,2.700 1.500,0 2.500,-0.200 3.500,-0.500" fill="none" stroke="#282C33" stroke-width="1.4" stroke-linecap="round" stroke-linejoin="round"/><path d="M14,17.500l-1,1a2,2 0 0 0 2.800,2.800l1-1M17,15.500l1-1a2,2 0 0 1 2.800,2.800l-1,1M15.500,18.500l3-3" fill="none" stroke="#282C33" stroke-width="1.4" stroke-linecap="round" stroke-linejoin="round"/></svg><svg style="left:10.55px;top:310.25px;" width="17.5" height="17.5" viewBox="0 0 24 24"><path d="M9,15L6.500,12.500C9,6.500 13.500,3.500 20,3.500c0,6.500-3,11-9,13.500Z" fill="none" stroke="#282C33" stroke-width="1.4" stroke-linecap="round" stroke-linejoin="round"/><circle cx="14.500" cy="9" r="1.800" fill="none" stroke="#282C33" stroke-width="1.3" stroke-linecap="round" stroke-linejoin="round"/><path d="M7,12l-3.500,0.500 2-3.500 3.500,-0.300M12,17l-0.500,3.500 3.500-2 0.300-3.500M3.500,20.500l3.500-3.500M3,17l2-2M7,21l2-2" fill="none" stroke="#282C33" stroke-width="1.3" stroke-linecap="round" stroke-linejoin="round"/></svg><svg style="left:10.55px;top:335.75px;" width="17.5" height="17.5" viewBox="0 0 24 24"><rect x="8" y="8" width="13" height="12.500" rx="1.500" fill="none" stroke="#282C33" stroke-width="1.5" stroke-linecap="round" stroke-linejoin="round"/><path d="M16.500,8V5a1.500,1.500 0 0 0 -1.500,-1.500H4.500A1.500,1.500 0 0 0 3,5v9.500A1.500,1.500 0 0 0 4.500,16H8M14.500,11v6.500M11.300,14.200h6.500" fill="none" stroke="#282C33" stroke-width="1.5" stroke-linecap="round" stroke-linejoin="round"/></svg><svg style="left:10.55px;top:360.75px;" width="17.5" height="17.5" viewBox="0 0 24 24"><path d="M10.500,5c0.800,4.500 2,5.700 6.500,6.500-4.500,0.800-5.700,2-6.500,6.500-0.800-4.500-2-5.700-6.500-6.500 4.500-0.800 5.700-2 6.500-6.500Z" fill="none" stroke="#282C33" stroke-width="1.4" stroke-linecap="round" stroke-linejoin="round"/><path d="M18.500,3v4M16.500,5h4" fill="none" stroke="#282C33" stroke-width="1.2" stroke-linecap="round" stroke-linejoin="round"/></svg><svg style="left:10.55px;top:385.75px;" width="17.5" height="17.5" viewBox="0 0 24 24"><path d="M9,5.500h2.200a2,2 0 1 1 3.600,0H17.500V9.500a2,2 0 1 1 0,3.600V18H13.500a2,2 0 1 0 -3.600,0H6V13.500H4.500a2,2 0 1 1 0,-3.600H6V5.500Z" fill="none" stroke="#282C33" stroke-width="1.4" stroke-linecap="round" stroke-linejoin="round"/></svg><svg style="left:10.55px;top:411.75px;" width="17.5" height="17.5" viewBox="0 0 24 24"><rect x="4" y="4" width="14" height="14" rx="1.500" fill="none" stroke="#282C33" stroke-width="1.4" stroke-linecap="round" stroke-linejoin="round"/><path d="M11.500,7l-3,4.500h2.500l-1,3.500 3.500,-4.500h-2.500Z" fill="#282C33"/><path d="M14,14l7,3 -3,1 -1,3Z" fill="#fff" stroke="#282C33" stroke-width="1.200" stroke-linejoin="round"/></svg><div style="left:45.00px;top:160.65px;font-size:12.79px;line-height:14.71px;color:#282C33;white-space:nowrap;font-weight:bold;">Shapes</div><svg style="left:96.30px;top:159.30px;" width="18" height="18" viewBox="0 0 24 24"><circle cx="10" cy="10" r="6.2" fill="none" stroke="#333" stroke-width="1.3" stroke-linecap="round" stroke-linejoin="round"/><path d="M14.8,14.8L21,21" fill="none" stroke="#333" stroke-width="1.3" stroke-linecap="round" stroke-linejoin="round"/></svg><div style="left:34.00px;top:181.30px;width:94.00px;height:1.00px;background:#E6E8EC;"></div><div style="left:39.70px;top:200.30px;width:1.20px;height:1.20px;background:#C5C8CE;border-radius:50%;"></div><div style="left:39.70px;top:202.70px;width:1.20px;height:1.20px;background:#C5C8CE;border-radius:50%;"></div><div style="left:39.70px;top:205.10px;width:1.20px;height:1.20px;background:#C5C8CE;border-radius:50%;"></div><div style="left:39.70px;top:207.50px;width:1.20px;height:1.20px;background:#C5C8CE;border-radius:50%;"></div><div style="left:43.10px;top:200.30px;width:1.20px;height:1.20px;background:#C5C8CE;border-radius:50%;"></div><div style="left:43.10px;top:202.70px;width:1.20px;height:1.20px;background:#C5C8CE;border-radius:50%;"></div><div style="left:43.10px;top:205.10px;width:1.20px;height:1.20px;background:#C5C8CE;border-radius:50%;"></div><div style="left:43.10px;top:207.50px;width:1.20px;height:1.20px;background:#C5C8CE;border-radius:50%;"></div><div style="left:50.50px;top:198.83px;font-size:9.85px;line-height:11.33px;color:#282C33;white-space:nowrap;font-weight:bold;">Shapes ...</div><svg style="left:103.50px;top:200.00px;" width="9" height="9" viewBox="0 0 24 24"><path d="M4.5,15.5L12,8l7.5,7.5" fill="none" stroke="#333" stroke-width="2.2" stroke-linecap="round" stroke-linejoin="round"/></svg><div style="left:122.00px;top:185.00px;width:4.00px;height:207.50px;background:#C2C2C2;border-radius:2px;"></div><div style="left:49.00px;top:222.00px;width:17.00px;height:17.00px;background:#E6A35D;"></div><div style="left:73.00px;top:226.45px;font-size:9.30px;line-height:10.70px;color:#333;white-space:nowrap;letter-spacing:0.120px;">Block</div><svg style="left:49px;top:243.6px" width="17" height="17" viewBox="0 0 17 17"><path d="M0,2.4 A8.5,2.4 0 0 1 17,2.4 V14.6 A8.5,2.4 0 0 1 0,14.6 Z" fill="#DEDFFB"/><ellipse cx="8.5" cy="2.4" rx="8.5" ry="2.4" fill="#ECECFD"/></svg><div style="left:73.00px;top:248.05px;font-size:9.30px;line-height:10.70px;color:#333;white-space:nowrap;letter-spacing:0.120px;">Datab...</div><div style="left:49.00px;top:265.20px;width:17.00px;height:17.00px;background:#DEDFFB;"></div><div style="left:73.00px;top:269.65px;font-size:9.30px;line-height:10.70px;color:#333;white-space:nowrap;letter-spacing:0.120px;">Block</div><div style="left:49.00px;top:286.80px;width:17.00px;height:17.00px;background:#DE8683;"></div><div style="left:73.00px;top:291.25px;font-size:9.30px;line-height:10.70px;color:#333;white-space:nowrap;letter-spacing:0.120px;">Block</div><div style="left:49.00px;top:308.40px;width:17.00px;height:17.00px;background:#6C6EF7;"></div><div style="left:73.00px;top:312.85px;font-size:9.30px;line-height:10.70px;color:#333;white-space:nowrap;letter-spacing:0.120px;">Block</div><div style="left:49.00px;top:330.00px;width:17.00px;height:17.00px;background:#577AC9;"></div><div style="left:73.00px;top:334.45px;font-size:9.30px;line-height:10.70px;color:#333;white-space:nowrap;letter-spacing:0.120px;">Block</div><div style="left:49.00px;top:351.60px;width:17.00px;height:17.00px;background:#D0D1D3;"></div><div style="left:73.00px;top:356.05px;font-size:9.30px;line-height:10.70px;color:#333;white-space:nowrap;letter-spacing:0.120px;">Block</div><svg style="left:49px;top:373.2000000000001px" width="17" height="17" viewBox="0 0 17 17"><path d="M0,2.4 A8.5,2.4 0 0 1 17,2.4 V14.6 A8.5,2.4 0 0 1 0,14.6 Z" fill="#DE8683"/><ellipse cx="8.5" cy="2.4" rx="8.5" ry="2.4" fill="#F0B5B3"/></svg><div style="left:73.00px;top:377.65px;font-size:9.30px;line-height:10.70px;color:#333;white-space:nowrap;letter-spacing:0.120px;">Datab...</div><div style="left:49.00px;top:394.80px;width:17.00px;height:17.00px;background:#D0D1D3;"></div><div style="left:73.00px;top:399.25px;font-size:9.30px;line-height:10.70px;color:#333;white-space:nowrap;letter-spacing:0.120px;">Block</div><svg style="left:51px;top:416.90000000000015px" width="13" height="15" viewBox="0 0 13 15"><circle cx="6.500" cy="3.800" r="3.600" fill="#111"/><path d="M0.300,15C0.500,9.500 3,8 6.500,8S12.500,9.500 12.700,15Z" fill="#111"/></svg><div style="left:73.00px;top:420.85px;font-size:9.30px;line-height:10.70px;color:#333;white-space:nowrap;letter-spacing:0.120px;">External...</div><div style="left:35.00px;top:448.27px;font-size:10.49px;line-height:12.06px;color:#3F3DC2;white-space:nowrap;">Create diagram key</div><div style="left:34.00px;top:478.80px;width:94.00px;height:1.00px;background:#E6E8EC;"></div><div style="left:39.70px;top:497.80px;width:1.20px;height:1.20px;background:#C5C8CE;border-radius:50%;"></div><div style="left:39.70px;top:500.20px;width:1.20px;height:1.20px;background:#C5C8CE;border-radius:50%;"></div><div style="left:39.70px;top:502.60px;width:1.20px;height:1.20px;background:#C5C8CE;border-radius:50%;"></div><div style="left:39.70px;top:505.00px;width:1.20px;height:1.20px;background:#C5C8CE;border-radius:50%;"></div><div style="left:43.10px;top:497.80px;width:1.20px;height:1.20px;background:#C5C8CE;border-radius:50%;"></div><div style="left:43.10px;top:500.20px;width:1.20px;height:1.20px;background:#C5C8CE;border-radius:50%;"></div><div style="left:43.10px;top:502.60px;width:1.20px;height:1.20px;background:#C5C8CE;border-radius:50%;"></div><div style="left:43.10px;top:505.00px;width:1.20px;height:1.20px;background:#C5C8CE;border-radius:50%;"></div><svg style="left:56.00px;top:496.50px;" width="11" height="11" viewBox="0 0 24 24"><path d="M12,3.5l2.6,5.4 5.9,0.8-4.3,4.1 1,5.9L12,16.9 6.8,19.7l1-5.9L3.5,9.7l5.9-0.8Z" fill="none" stroke="#333" stroke-width="1.8" stroke-linecap="round" stroke-linejoin="round"/></svg><svg style="left:78.25px;top:496.25px;" width="11.5" height="11.5" viewBox="0 0 24 24"><path d="M4,6.500H20M9,6V3.800h6V6M6,6.500V19.500a1.500,1.500 0 0 0 1.500,1.500h9A1.500,1.500 0 0 0 18,19.500V6.500M9.700,10v7.500M12,10v7.500M14.300,10v7.500" fill="none" stroke="#333" stroke-width="1.7" stroke-linecap="round" stroke-linejoin="round"/></svg><svg style="left:104.50px;top:497.50px;" width="9" height="9" viewBox="0 0 24 24"><path d="M4.5,15.5L12,8l7.5,7.5" fill="none" stroke="#333" stroke-width="2.2" stroke-linecap="round" stroke-linejoin="round"/></svg><div style="left:73.00px;top:525.15px;font-size:9.30px;line-height:10.70px;color:#333;white-space:nowrap;letter-spacing:0.120px;">Text</div><div style="left:73.00px;top:546.80px;font-size:9.30px;line-height:10.70px;color:#333;white-space:nowrap;letter-spacing:0.120px;">Block</div><div style="left:73.00px;top:568.45px;font-size:9.30px;line-height:10.70px;color:#333;white-space:nowrap;letter-spacing:0.120px;">Sticky ...</div><div style="left:73.00px;top:590.10px;font-size:9.30px;line-height:10.70px;color:#333;white-space:nowrap;letter-spacing:0.120px;">Hotspot</div><div style="left:73.00px;top:611.75px;font-size:9.30px;line-height:10.70px;color:#333;white-space:nowrap;letter-spacing:0.120px;">Line</div><div style="left:73.00px;top:633.40px;font-size:9.30px;line-height:10.70px;color:#333;white-space:nowrap;letter-spacing:0.120px;">Diagram...</div><div style="left:73.00px;top:655.05px;font-size:9.30px;line-height:10.70px;color:#333;white-space:nowrap;letter-spacing:0.120px;">Prese...</div><div style="left:49px;top:517.8px;width:17px;text-align:center;font-family:'Liberation Serif',serif;font-size:20px;line-height:22px;color:#222;">T</div><div style="left:49.00px;top:542.45px;width:17.00px;height:17.00px;background:#fff;border:1px solid #333;border-radius:1px;"></div><svg style="left:49px;top:564.0999999999999px" width="17" height="17" viewBox="0 0 17 17"><path d="M0.500,0.500H16.500V16.500H4.500L0.500,12.500Z" fill="#F8EBAE" stroke="#333" stroke-width="1"/><path d="M0.500,12.500H4.500V16.500" fill="#fff" stroke="#333" stroke-width="1"/></svg><div style="left:49.00px;top:585.75px;width:17.00px;height:17.00px;background:#BFE9DC;border:1px solid #333;"></div><svg style="left:54px;top:589.75px" width="7" height="9" viewBox="0 0 7 9"><path d="M4.500,0L1,5h2.200L2.300,9 6,3.800H3.700Z" fill="#3E9C7F"/></svg><svg style="left:49px;top:607.4px" width="17" height="17" viewBox="0 0 17 17"><path d="M2.500,14.500L13,4" stroke="#222" stroke-width="1.200"/><path d="M15.500,1.500L10.500,3.500 13.500,6.500Z" fill="#222"/></svg><div style="left:49.00px;top:629.05px;width:17.00px;height:17.00px;background:#fff;border:1px solid #333;border-radius:1px;"></div><svg style="left:49px;top:629.05px" width="17" height="17" viewBox="0 0 17 17"><circle cx="4.300" cy="4.300" r="1.300" fill="#6C6EF7"/><rect x="3" y="7.300" width="2.600" height="2.600" fill="#E2762F"/><path d="M4.300,11.600l1.500,2.500h-3Z" fill="#444"/><path d="M7.500,4.300H14M7.500,8.600H14M7.500,12.900H14" stroke="#333" stroke-width="1.100"/></svg><div style="left:49.00px;top:650.70px;width:17.00px;height:17.00px;background:#DEDFFB;border:1px solid #333;"></div><svg style="left:55px;top:656.1999999999999px" width="5" height="6" viewBox="0 0 5 6"><path d="M0,0L5,3 0,6Z" fill="#6C6EF7"/></svg><div style="left:34.00px;top:683.80px;width:94.00px;height:1.00px;background:#E6E8EC;"></div><div style="left:39.70px;top:702.80px;width:1.20px;height:1.20px;background:#C5C8CE;border-radius:50%;"></div><div style="left:39.70px;top:705.20px;width:1.20px;height:1.20px;background:#C5C8CE;border-radius:50%;"></div><div style="left:39.70px;top:707.60px;width:1.20px;height:1.20px;background:#C5C8CE;border-radius:50%;"></div><div style="left:39.70px;top:710.00px;width:1.20px;height:1.20px;background:#C5C8CE;border-radius:50%;"></div><div style="left:43.10px;top:702.80px;width:1.20px;height:1.20px;background:#C5C8CE;border-radius:50%;"></div><div style="left:43.10px;top:705.20px;width:1.20px;height:1.20px;background:#C5C8CE;border-radius:50%;"></div><div style="left:43.10px;top:707.60px;width:1.20px;height:1.20px;background:#C5C8CE;border-radius:50%;"></div><div style="left:43.10px;top:710.00px;width:1.20px;height:1.20px;background:#C5C8CE;border-radius:50%;"></div><svg style="left:56.00px;top:701.50px;" width="11" height="11" viewBox="0 0 24 24"><path d="M12,3.5l2.6,5.4 5.9,0.8-4.3,4.1 1,5.9L12,16.9 6.8,19.7l1-5.9L3.5,9.7l5.9-0.8Z" fill="none" stroke="#333" stroke-width="1.8" stroke-linecap="round" stroke-linejoin="round"/></svg><svg style="left:78.25px;top:701.25px;" width="11.5" height="11.5" viewBox="0 0 24 24"><path d="M4,6.500H20M9,6V3.800h6V6M6,6.500V19.500a1.500,1.500 0 0 0 1.500,1.500h9A1.500,1.500 0 0 0 18,19.500V6.500M9.700,10v7.500M12,10v7.500M14.300,10v7.500" fill="none" stroke="#333" stroke-width="1.7" stroke-linecap="round" stroke-linejoin="round"/></svg><svg style="left:104.50px;top:702.50px;" width="9" height="9" viewBox="0 0 24 24"><path d="M4.5,15.5L12,8l7.5,7.5" fill="none" stroke="#333" stroke-width="2.2" stroke-linecap="round" stroke-linejoin="round"/></svg><div style="left:48.50px;top:727.00px;width:17.50px;height:12.50px;background:#fff;border:1px solid #333;"></div><div style="left:73.00px;top:729.45px;font-size:9.30px;line-height:10.70px;color:#333;white-space:nowrap;letter-spacing:0.120px;">Process</div><svg style="left:48px;top:747.500px" width="19" height="8" viewBox="0 0 19 8"><path d="M0.500,7.500L9.500,0.700 18.500,7.500" fill="none" stroke="#333" stroke-width="1"/></svg><div style="left:73.00px;top:751.15px;font-size:9.30px;line-height:10.70px;color:#333;white-space:nowrap;letter-spacing:0.120px;height:3px;overflow:hidden;top:751.500px;line-height:6px;">Decision</div><div style="left:34.50px;top:754.50px;width:93.50px;height:82.00px;background:#fff;"></div><div style="left:34.00px;top:754.20px;width:94.00px;height:1.00px;background:#EEF0F3;"></div><svg style="left:50px;top:761px" width="64" height="12" viewBox="0 0 64 12"><rect x="1" y="4" width="12" height="12" rx="2" fill="#4C7BE8" transform="rotate(-12 7 10)"/><rect x="13" y="1.500" width="13" height="13" rx="2" fill="#E08A2C" transform="rotate(14 19 8)"/><rect x="27" y="5" width="9" height="9" rx="1.500" fill="#7FB3F0"/><rect x="34" y="2" width="13" height="12" fill="#fff" stroke="#555" stroke-width="0.800" transform="rotate(-8 40 8)"/><path d="M34,6.500h13M38.500,2v12M43,2v12" stroke="#555" stroke-width="0.700" transform="rotate(-8 40 8)"/><rect x="48" y="3" width="14" height="12" rx="2" fill="#CC3366" transform="rotate(12 55 9)"/></svg><div style="left:34.00px;top:771.60px;width:93.80px;height:22.60px;background:#3F3DC2;border-radius:3px;"></div><div style="left:51.00px;top:777.40px;font-size:9.73px;line-height:11.19px;color:#fff;white-space:nowrap;font-weight:bold;">More shapes</div><div style="left:34.00px;top:805.00px;width:94.00px;height:1.00px;background:#E6E8EC;"></div><svg style="left:45.50px;top:814.50px;" width="13" height="13" viewBox="0 0 24 24"><path d="M2.500,12H14M10,7.500l4.500,4.500-4.500,4.500M11,4.500h8a1.500,1.500 0 0 1 1.500,1.500V18a1.500,1.500 0 0 1 -1.500,1.500H11" fill="none" stroke="#6B69D6" stroke-width="1.5" stroke-linecap="round" stroke-linejoin="round"/></svg><div style="left:63.00px;top:815.05px;font-size:10.87px;line-height:12.50px;color:#3F3DC2;white-space:nowrap;">Import data</div><svg style="left:13.00px;top:840.80px;" width="15" height="15" viewBox="0 0 24 24"><circle cx="3.800" cy="4.500" r="1.500" fill="#222"/><circle cx="3.800" cy="9.500" r="1.500" fill="#222"/><circle cx="3.800" cy="14.500" r="1.500" fill="#222"/><circle cx="3.800" cy="19.500" r="1.500" fill="#222"/><path d="M8.500,4.500H21M8.500,9.500H21M8.500,14.500H21M8.500,19.500H21" fill="none" stroke="#444" stroke-width="1.5" stroke-linecap="round" stroke-linejoin="round"/></svg><svg style="left:38.50px;top:840.80px;" width="15" height="15" viewBox="0 0 24 24"><rect x="3" y="3" width="7.500" height="7.500" rx="1.500" fill="none" stroke="#444" stroke-width="1.5" stroke-linecap="round" stroke-linejoin="round"/><rect x="13.500" y="3" width="7.500" height="7.500" rx="1.500" fill="none" stroke="#444" stroke-width="1.5" stroke-linecap="round" stroke-linejoin="round"/><rect x="3" y="13.500" width="7.500" height="7.500" rx="1.500" fill="none" stroke="#444" stroke-width="1.5" stroke-linecap="round" stroke-linejoin="round"/><rect x="13.500" y="13.500" width="7.500" height="7.500" rx="1.500" fill="none" stroke="#444" stroke-width="1.5" stroke-linecap="round" stroke-linejoin="round"/></svg><div style="left:64.30px;top:836.80px;width:121.70px;height:19.70px;background:#6B6D73;border-radius:0 0 3px 3px;"></div><div style="left:70.00px;top:842.21px;font-size:10.59px;line-height:12.18px;color:#fff;white-space:nowrap;">Configuration ma...</div><svg style="left:175.5px;top:846px" width="5.500" height="4.500" viewBox="0 0 7 5"><path d="M0,0H7L3.500,4.800Z" fill="#fff"/></svg><svg style="left:197.50px;top:841.30px;" width="14" height="14" viewBox="0 0 24 24"><circle cx="12" cy="12" r="9.500" fill="none" stroke="#333" stroke-width="1.4" stroke-linecap="round" stroke-linejoin="round"/><path d="M12,7v10M7,12h10" fill="none" stroke="#333" stroke-width="1.4" stroke-linecap="round" stroke-linejoin="round"/></svg><div style="left:411.50px;top:837.00px;width:1.00px;height:23.00px;background:#EEF0F3;"></div><svg style="left:419.00px;top:840.80px;" width="15" height="15" viewBox="0 0 24 24"><path d="M3.500,3.500v15.500h7M3.500,3.500H19v7M1.500,3.500h2M19,1.500v2M3.500,19v2" fill="none" stroke="#333" stroke-width="1.5" stroke-linecap="round" stroke-linejoin="round"/><path d="M11,10l9.500,3.800-4,1.500 3.500,3.800-1.500,1.400-3.500-3.800-1.800,3.800Z" fill="none" stroke="#333" stroke-width="1.3" stroke-linecap="round" stroke-linejoin="round"/></svg><div style="left:438.00px;top:842.15px;font-size:10.70px;line-height:12.30px;color:#282C33;white-space:nowrap;">Selected objects</div><div style="left:520.00px;top:843.50px;width:10.00px;height:10.00px;background:#DEDFFB;border-radius:50%;"></div><div style="left:520.00px;top:843.99px;font-size:7.50px;line-height:8.62px;color:#3F3DC2;white-space:nowrap;font-weight:bold;width:10.00px;text-align:center;">0</div><svg style="left:536.5px;top:846px" width="5.500" height="4.500" viewBox="0 0 7 5"><path d="M0,0H7L3.500,4.800Z" fill="#222"/></svg><div style="left:550.50px;top:837.00px;width:1.00px;height:23.00px;background:#EEF0F3;"></div><svg style="left:554.50px;top:840.80px;" width="15" height="15" viewBox="0 0 24 24"><path d="M12,3.500L21,8l-9,4.500L3,8Z M3.500,12L12,16.300 20.500,12M3.500,16L12,20.300 20.500,16" fill="none" stroke="#333" stroke-width="1.4" stroke-linecap="round" stroke-linejoin="round"/></svg><div style="left:573.50px;top:837.00px;width:1.00px;height:23.00px;background:#EEF0F3;"></div><svg style="left:577.75px;top:841.05px;" width="14.5" height="14.5" viewBox="0 0 24 24"><circle cx="12" cy="12" r="9.500" fill="none" stroke="#333" stroke-width="1.4" stroke-linecap="round" stroke-linejoin="round"/><path d="M7.500,17L12,6.500 16.500,17M9,14h6" fill="none" stroke="#333" stroke-width="1.4" stroke-linecap="round" stroke-linejoin="round"/></svg><div style="left:596.00px;top:837.00px;width:1.00px;height:23.00px;background:#EEF0F3;"></div><div style="left:603.30px;top:847.70px;width:9.50px;height:1.30px;background:#333;"></div><div style="left:628.00px;top:842.70px;font-size:9.74px;line-height:11.20px;color:#282C33;white-space:nowrap;">31%</div><svg style="left:662.25px;top:843.05px;" width="10.5" height="10.5" viewBox="0 0 24 24"><path d="M12,3V21M3,12H21" fill="none" stroke="#333" stroke-width="2.2" stroke-linecap="round" stroke-linejoin="round"/></svg><div style="left:679.50px;top:837.00px;width:1.00px;height:23.00px;background:#EEF0F3;"></div><svg style="left:686.00px;top:840.80px;" width="15" height="15" viewBox="0 0 24 24"><path d="M4,9V4h5M4,4l5,5M20,9V4h-5M20,4l-5,5M4,15V20h5M4,20l5-5M20,15V20h-5M20,20l-5-5" fill="none" stroke="#333" stroke-width="1.4" stroke-linecap="round" stroke-linejoin="round"/></svg><div style="left:707.50px;top:837.00px;width:1.00px;height:23.00px;background:#EEF0F3;"></div><svg style="left:714.05px;top:841.05px;" width="14.5" height="14.5" viewBox="0 0 24 24"><circle cx="12" cy="12" r="9.500" fill="none" stroke="#333" stroke-width="1.3" stroke-linecap="round" stroke-linejoin="round"/><path d="M9.300,9.500a2.800,2.800 0 1 1 4.200,2.400c-1,0.600-1.500,1.200-1.500,2.300" fill="none" stroke="#333" stroke-width="1.4" stroke-linecap="round" stroke-linejoin="round"/><circle cx="12" cy="17.300" r="0.900" fill="#333"/></svg><div style="left:637.80px;top:368.20px;font-size:5.74px;line-height:6.60px;color:#333;white-space:nowrap;font-weight:bold;">Learn how to edit this template</div><div style="left:636.30px;top:379.24px;font-size:4.65px;line-height:5.72px;color:#4a4a4a;white-space:nowrap;font-style:italic;filter:blur(0.250px);"><b>1.</b></div><div style="left:646.30px;top:379.24px;font-size:4.65px;line-height:5.72px;color:#4a4a4a;white-space:nowrap;font-style:italic;filter:blur(0.250px);"><b>Add text to a shape</b> by selecting it</div><div style="left:646.30px;top:384.96px;font-size:4.65px;line-height:5.72px;color:#4a4a4a;white-space:nowrap;font-style:italic;filter:blur(0.250px);">and typing.</div><div style="left:636.30px;top:390.68px;font-size:4.65px;line-height:5.72px;color:#4a4a4a;white-space:nowrap;font-style:italic;filter:blur(0.250px);">2.</div><div style="left:646.30px;top:390.68px;font-size:4.65px;line-height:5.72px;color:#4a4a4a;white-space:nowrap;font-style:italic;filter:blur(0.250px);">To <b>format shapes</b> as you'd like,</div><div style="left:646.30px;top:396.40px;font-size:4.65px;line-height:5.72px;color:#4a4a4a;white-space:nowrap;font-style:italic;filter:blur(0.250px);">click on a shape and then click</div><div style="left:646.30px;top:402.12px;font-size:4.65px;line-height:5.72px;color:#4a4a4a;white-space:nowrap;font-style:italic;filter:blur(0.250px);">"Shape Options" &#9635;, "Fill Color" &#9672;,</div><div style="left:646.30px;top:407.84px;font-size:4.65px;line-height:5.72px;color:#4a4a4a;white-space:nowrap;font-style:italic;filter:blur(0.250px);">and "Line Color" &#10002; on the properties</div><div style="left:646.30px;top:413.56px;font-size:4.65px;line-height:5.72px;color:#4a4a4a;white-space:nowrap;font-style:italic;filter:blur(0.250px);">bar at the top of the canvas.</div><div style="left:636.30px;top:419.28px;font-size:4.65px;line-height:5.72px;color:#4a4a4a;white-space:nowrap;font-style:italic;filter:blur(0.250px);">3.</div><div style="left:646.30px;top:419.28px;font-size:4.65px;line-height:5.72px;color:#4a4a4a;white-space:nowrap;font-style:italic;filter:blur(0.250px);">Hover over a shape and click on</div><div style="left:646.30px;top:425.00px;font-size:4.65px;line-height:5.72px;color:#4a4a4a;white-space:nowrap;font-style:italic;filter:blur(0.250px);">any red circle <span style="color:#E55">&#9675;</span> to <b>add lines</b>.</div><div style="left:636.30px;top:430.72px;font-size:4.65px;line-height:5.72px;color:#4a4a4a;white-space:nowrap;font-style:italic;filter:blur(0.250px);"><b>4.</b></div><div style="left:646.30px;top:430.72px;font-size:4.65px;line-height:5.72px;color:#4a4a4a;white-space:nowrap;font-style:italic;filter:blur(0.250px);"><b>Add text to a line</b> by</div><div style="left:646.30px;top:436.44px;font-size:4.65px;line-height:5.72px;color:#4a4a4a;white-space:nowrap;font-style:italic;filter:blur(0.250px);">double-clicking the text or anywhere</div><div style="left:646.30px;top:442.16px;font-size:4.65px;line-height:5.72px;color:#4a4a4a;white-space:nowrap;font-style:italic;filter:blur(0.250px);">on the line and typing.</div><div style="left:636.30px;top:447.88px;font-size:4.65px;line-height:5.72px;color:#4a4a4a;white-space:nowrap;font-style:italic;filter:blur(0.250px);">5.</div><div style="left:643.80px;top:447.88px;font-size:4.65px;line-height:5.72px;color:#4a4a4a;white-space:nowrap;font-style:italic;filter:blur(0.250px);">To <b>format lines</b>, click on a line and</div><div style="left:643.80px;top:453.60px;font-size:4.65px;line-height:5.72px;color:#4a4a4a;white-space:nowrap;font-style:italic;filter:blur(0.250px);">use the properties bar at the top of</div><div style="left:643.80px;top:459.32px;font-size:4.65px;line-height:5.72px;color:#4a4a4a;white-space:nowrap;font-style:italic;filter:blur(0.250px);">the canvas.</div><div style="left:628px;top:473px;width:102.500px;text-align:center;font-size:4.900px;line-height:6px;font-weight:bold;color:#333;">Tutorials</div><div style="left:628px;top:479.600px;width:102.500px;text-align:center;font-size:4.650px;line-height:6px;font-style:italic;color:#4a4a4a;">(Hold Shift + &#8984; or Ctrl, then click)</div><div style="left:636.50px;top:491.00px;width:86.50px;height:17.50px;background:#6E717C;border-radius:5px;box-shadow:0 1px 1.500px rgba(0,0,0,.35);"></div><div style="left:636.5px;top:496px;width:86.500px;text-align:center;font-size:4.700px;line-height:6px;color:#fff;">Watch Lucidchart basic tutorials</div><svg style="left:706.5px;top:500.5px" width="12.6" height="14.0" viewBox="0 0 18 20"><path d="M5.500,1.200c0.900-0.500 2,0 2.300,1L9.600,8l1-0.300c0.800-0.200 1.500,0.200 1.800,0.900l0.800-0.200c0.800-0.200 1.500,0.300 1.700,1l0.500-0.100c0.900-0.200 1.600,0.400 1.800,1.200l0.600,3.500c0.300,1.600-0.400,3.200-1.900,3.900l-3,1.300c-1.500,0.600-3.200,0.200-4.200-1L4.500,13c-0.600-0.700-0.400-1.700 0.300-2.200 0.700-0.400 1.500-0.200 2,0.400l0.700,0.900L4.700,3.300C4.400,2.500 4.700,1.600 5.500,1.200Z" fill="#fff" stroke="#111" stroke-width="1.100" stroke-linejoin="round" transform="rotate(-18 9 10)"/></svg></div></div><div style="left:735.00px;top:80.00px;width:4.00px;height:785.00px;background:#E3E3E3;"></div><div style="left:2.00px;top:80.00px;width:4.00px;height:785.00px;background:#EDEDED;"></div><div style="left:8.00px;top:7.50px;width:61.00px;height:20.00px;border:1px solid #6a6a6a;border-radius:10px;"></div><svg style="left:10.00px;top:9.50px" width="16" height="16" viewBox="0 0 40 40"><defs><clipPath id="av18_17"><circle cx="20" cy="20" r="20"/></clipPath><filter id="ab18_17" x="-10%" y="-10%" width="120%" height="120%"><feGaussianBlur stdDeviation="0.55"/></filter></defs><g clip-path="url(#av18_17)"><rect width="40" height="40" fill="#D9DDE3"/><g filter="url(#ab18_17)"><path d="M1,44C2,33 7,29.500 14,28.500L27,28.500C34,29.500 38,33 39,44Z" fill="#5F86C9"/><path d="M14.500,25h12v6.500c-2,3.500-10,3.500-12,0Z" fill="#B98B78"/><ellipse cx="20.700" cy="17.800" rx="10.600" ry="13" fill="#CDA592"/><ellipse cx="9.800" cy="19.500" rx="1.500" ry="2.600" fill="#C39A87"/><ellipse cx="31.600" cy="19.500" rx="1.500" ry="2.600" fill="#C39A87"/><path d="M9.600,18C8,7 13,1.500 20.700,1.500S33.500,7 31.800,18C31.500,11.500 29,8 25,7.200 22,6.600 19,6.600 16.500,7.200 12.500,8 10,11.500 9.600,18Z" fill="#8C8782"/><ellipse cx="16.300" cy="15.300" rx="2.300" ry="0.900" fill="#6B5147"/><ellipse cx="24.700" cy="15.300" rx="2.300" ry="0.900" fill="#6B5147"/><path d="M19.300,16v5.500q1.300,0.800 2.600,0" fill="none" stroke="#B48A78" stroke-width="1.100"/><path d="M16.800,24.300q3.800,1.400 7.600,0" fill="none" stroke="#A86F68" stroke-width="1.300" stroke-linecap="round"/><path d="M12.500,24q1.500,6.500 8.200,7 6.700,-0.500 8.200,-7 -1.500,8.500 -8.200,9 -6.700,-0.500 -8.200,-9Z" fill="#B89380" opacity=".6"/></g></g></svg><div style="left:31.00px;top:11.92px;font-size:9.70px;line-height:11.15px;color:#333;white-space:nowrap;transform:scaleX(0.7966);transform-origin:0 50%;">Personal</div><svg style="left:79.50px;top:10.00px;" width="15" height="15" viewBox="0 0 24 24"><rect x="9" y="8" width="11" height="11.5" rx="2.5" fill="none" stroke="#333" stroke-width="1.5" stroke-linecap="round" stroke-linejoin="round"/><path d="M7,17.5l-2.8-8.5a2.3,2.3 0 0 1 1.5,-2.9L13,3.7a2.3,2.3 0 0 1 2.8,1.2L16.3,6M9,15l-1.5-4a2,2 0 0 1 1.2,-2.5" fill="none" stroke="#333" stroke-width="1.4" stroke-linecap="round" stroke-linejoin="round"/></svg><svg style="left:109.00px;top:10.50px;" width="14" height="14" viewBox="0 0 24 24"><rect x="3.5" y="4" width="17" height="16" rx="3" fill="none" stroke="#222" stroke-width="1.8" stroke-linecap="round" stroke-linejoin="round"/><path d="M3.5,8.5H20.5M8.5,8.5V20" fill="none" stroke="#222" stroke-width="1.8" stroke-linecap="round" stroke-linejoin="round"/><path d="M4,5.5a2,2 0 0 1 2,-1.5h12a2,2 0 0 1 2,1.5V8.5H4Z" fill="#222"/></svg><div style="left:135.00px;top:10.80px;width:1.00px;height:14.00px;background:#8f8f8f;"></div><div style="left:143.00px;top:12.00px;width:11.00px;height:11.00px;background:#23262F;"></div><svg style="left:143px;top:12px" width="11" height="11" viewBox="0 0 11 11"><path d="M5.6,2.2L4.3,8.6" stroke="#fff" stroke-width="1.6" stroke-linecap="butt"/><rect x="6.2" y="7.2" width="1.7" height="1.6" fill="#fff"/></svg><div style="left:159.00px;top:10.80px;width:1.00px;height:14.00px;background:#8f8f8f;"></div><div style="left:167.00px;top:12.00px;width:11.00px;height:11.00px;background:#9C9C9F;"></div><svg style="left:167px;top:12px" width="11" height="11" viewBox="0 0 11 11"><path d="M5.6,2.2L4.3,8.6" stroke="#fff" stroke-width="1.6" stroke-linecap="butt"/><rect x="6.2" y="7.2" width="1.7" height="1.6" fill="#fff"/></svg><div style="left:182.80px;top:10.80px;width:1.00px;height:14.00px;background:#8f8f8f;"></div><svg style="left:222px;top:6px" width="42" height="23.2" viewBox="0 0 42 23.2"><path d="M0,23.2 C6,23.2 8.5,21 8.5,16 V6 a6,6 0 0 1 6,-6 H27.5 a6,6 0 0 1 6,6 V16 C33.5,21 36,23.2 42,23.2 Z" fill="#F7F7F7"/></svg><svg style="left:240.80px;top:14.00px;" width="7" height="7" viewBox="0 0 24 24"><path d="M4,4L20,20M20,4L4,20" fill="none" stroke="#333" stroke-width="2.2" stroke-linecap="round" stroke-linejoin="round"/></svg><svg style="left:190.65px;top:11.75px;" width="11.5" height="11.5" viewBox="0 0 24 24"><path d="M3.8,6.8V16.4L12.5,21.7" fill="none" stroke="#E0762F" stroke-width="4.0" stroke-linecap="round" stroke-linejoin="round"/><path d="M11.9,2.3L20.25,7.4V17.3" fill="none" stroke="#E0762F" stroke-width="4.0" stroke-linecap="round" stroke-linejoin="round"/></svg><svg style="left:214.05px;top:11.75px;" width="11.5" height="11.5" viewBox="0 0 24 24"><path d="M3.8,6.8V16.4L12.5,21.7" fill="none" stroke="#E0762F" stroke-width="4.0" stroke-linecap="round" stroke-linejoin="round"/><path d="M11.9,2.3L20.25,7.4V17.3" fill="none" stroke="#E0762F" stroke-width="4.0" stroke-linecap="round" stroke-linejoin="round"/></svg><svg style="left:261.75px;top:11.75px;" width="11.5" height="11.5" viewBox="0 0 24 24"><path d="M3.8,6.8V16.4L12.5,21.7" fill="none" stroke="#E0762F" stroke-width="4.0" stroke-linecap="round" stroke-linejoin="round"/><path d="M11.9,2.3L20.25,7.4V17.3" fill="none" stroke="#E0762F" stroke-width="4.0" stroke-linecap="round" stroke-linejoin="round"/></svg><svg style="left:285.25px;top:11.75px;" width="11.5" height="11.5" viewBox="0 0 24 24"><path d="M3.8,6.8V16.4L12.5,21.7" fill="none" stroke="#E0762F" stroke-width="4.0" stroke-linecap="round" stroke-linejoin="round"/><path d="M11.9,2.3L20.25,7.4V17.3" fill="none" stroke="#E0762F" stroke-width="4.0" stroke-linecap="round" stroke-linejoin="round"/></svg><svg style="left:308.95px;top:11.75px;" width="11.5" height="11.5" viewBox="0 0 24 24"><path d="M3.8,6.8V16.4L12.5,21.7" fill="none" stroke="#E0762F" stroke-width="4.0" stroke-linecap="round" stroke-linejoin="round"/><path d="M11.9,2.3L20.25,7.4V17.3" fill="none" stroke="#E0762F" stroke-width="4.0" stroke-linecap="round" stroke-linejoin="round"/></svg><svg style="left:332.75px;top:11.75px;" width="11.5" height="11.5" viewBox="0 0 24 24"><path d="M3.8,6.8V16.4L12.5,21.7" fill="none" stroke="#E0762F" stroke-width="4.0" stroke-linecap="round" stroke-linejoin="round"/><path d="M11.9,2.3L20.25,7.4V17.3" fill="none" stroke="#E0762F" stroke-width="4.0" stroke-linecap="round" stroke-linejoin="round"/></svg><svg style="left:356.55px;top:11.75px;" width="11.5" height="11.5" viewBox="0 0 24 24"><path d="M3.8,6.8V16.4L12.5,21.7" fill="none" stroke="#E0762F" stroke-width="4.0" stroke-linecap="round" stroke-linejoin="round"/><path d="M11.9,2.3L20.25,7.4V17.3" fill="none" stroke="#E0762F" stroke-width="4.0" stroke-linecap="round" stroke-linejoin="round"/></svg><svg style="left:380.25px;top:11.75px;" width="11.5" height="11.5" viewBox="0 0 24 24"><path d="M3.8,6.8V16.4L12.5,21.7" fill="none" stroke="#E0762F" stroke-width="4.0" stroke-linecap="round" stroke-linejoin="round"/><path d="M11.9,2.3L20.25,7.4V17.3" fill="none" stroke="#E0762F" stroke-width="4.0" stroke-linecap="round" stroke-linejoin="round"/></svg><svg style="left:404.25px;top:11.75px;" width="11.5" height="11.5" viewBox="0 0 24 24"><path d="M3.8,6.8V16.4L12.5,21.7" fill="none" stroke="#E0762F" stroke-width="4.0" stroke-linecap="round" stroke-linejoin="round"/><path d="M11.9,2.3L20.25,7.4V17.3" fill="none" stroke="#E0762F" stroke-width="4.0" stroke-linecap="round" stroke-linejoin="round"/></svg><svg style="left:427.75px;top:11.75px;" width="11.5" height="11.5" viewBox="0 0 24 24"><path d="M3.8,6.8V16.4L12.5,21.7" fill="none" stroke="#E0762F" stroke-width="4.0" stroke-linecap="round" stroke-linejoin="round"/><path d="M11.9,2.3L20.25,7.4V17.3" fill="none" stroke="#E0762F" stroke-width="4.0" stroke-linecap="round" stroke-linejoin="round"/></svg><svg style="left:451.55px;top:11.75px;" width="11.5" height="11.5" viewBox="0 0 24 24"><path d="M3.8,6.8V16.4L12.5,21.7" fill="none" stroke="#E0762F" stroke-width="4.0" stroke-linecap="round" stroke-linejoin="round"/><path d="M11.9,2.3L20.25,7.4V17.3" fill="none" stroke="#E0762F" stroke-width="4.0" stroke-linecap="round" stroke-linejoin="round"/></svg><svg style="left:475.25px;top:11.75px;" width="11.5" height="11.5" viewBox="0 0 24 24"><path d="M3.8,6.8V16.4L12.5,21.7" fill="none" stroke="#E0762F" stroke-width="4.0" stroke-linecap="round" stroke-linejoin="round"/><path d="M11.9,2.3L20.25,7.4V17.3" fill="none" stroke="#E0762F" stroke-width="4.0" stroke-linecap="round" stroke-linejoin="round"/></svg><svg style="left:499.25px;top:11.75px;" width="11.5" height="11.5" viewBox="0 0 24 24"><path d="M3.8,6.8V16.4L12.5,21.7" fill="none" stroke="#E0762F" stroke-width="4.0" stroke-linecap="round" stroke-linejoin="round"/><path d="M11.9,2.3L20.25,7.4V17.3" fill="none" stroke="#E0762F" stroke-width="4.0" stroke-linecap="round" stroke-linejoin="round"/></svg><div style="left:207.60px;top:10.80px;width:1.00px;height:14.00px;background:#8f8f8f;"></div><div style="left:278.75px;top:10.80px;width:1.00px;height:14.00px;background:#8f8f8f;"></div><div style="left:302.35px;top:10.80px;width:1.00px;height:14.00px;background:#8f8f8f;"></div><div style="left:326.10px;top:10.80px;width:1.00px;height:14.00px;background:#8f8f8f;"></div><div style="left:349.90px;top:10.80px;width:1.00px;height:14.00px;background:#8f8f8f;"></div><div style="left:373.65px;top:10.80px;width:1.00px;height:14.00px;background:#8f8f8f;"></div><div style="left:397.50px;top:10.80px;width:1.00px;height:14.00px;background:#8f8f8f;"></div><div style="left:421.25px;top:10.80px;width:1.00px;height:14.00px;background:#8f8f8f;"></div><div style="left:444.90px;top:10.80px;width:1.00px;height:14.00px;background:#8f8f8f;"></div><div style="left:468.65px;top:10.80px;width:1.00px;height:14.00px;background:#8f8f8f;"></div><div style="left:492.50px;top:10.80px;width:1.00px;height:14.00px;background:#8f8f8f;"></div><div style="left:515.90px;top:10.80px;width:1.00px;height:14.00px;background:#8f8f8f;"></div><svg style="left:523.00px;top:11.00px;" width="13" height="13" viewBox="0 0 24 24"><path d="M6,3.5h8l4.5,4.5V20.5H6Z M14,3.5V8h4.5" fill="none" stroke="#333" stroke-width="1.6" stroke-linecap="round" stroke-linejoin="round"/></svg><div style="left:540.00px;top:10.80px;width:1.00px;height:14.00px;background:#8f8f8f;"></div><svg style="left:546.50px;top:11.00px;" width="13" height="13" viewBox="0 0 24 24"><path d="M6,3.5h8l4.5,4.5V20.5H6Z M14,3.5V8h4.5" fill="none" stroke="#333" stroke-width="1.6" stroke-linecap="round" stroke-linejoin="round"/></svg><div style="left:563.10px;top:10.80px;width:1.00px;height:14.00px;background:#8f8f8f;"></div><svg style="left:570.00px;top:11.00px;" width="13" height="13" viewBox="0 0 24 24"><rect x="3.5" y="4" width="17" height="16" rx="3.5" fill="none" stroke="#333" stroke-width="1.7" stroke-linecap="round" stroke-linejoin="round"/><path d="M3.5,9H20.5" fill="none" stroke="#333" stroke-width="1.7" stroke-linecap="round" stroke-linejoin="round"/><circle cx="8" cy="14" r="1.1" fill="#333"/><circle cx="12" cy="14" r="1.1" fill="#333"/><circle cx="16" cy="14" r="1.1" fill="#333"/></svg><div style="left:586.30px;top:10.80px;width:1.00px;height:14.00px;background:#8f8f8f;"></div><svg style="left:595.70px;top:11.50px;" width="12" height="12" viewBox="0 0 24 24"><path d="M12,3V21M3,12H21" fill="none" stroke="#333" stroke-width="1.7" stroke-linecap="round" stroke-linejoin="round"/></svg><div style="left:653.50px;top:12.50px;width:8.50px;height:1.00px;background:#9a9a9a;"></div><div style="left:685.50px;top:9.00px;width:8.00px;height:8.00px;border:1px solid #9a9a9a;border-radius:1px;"></div><svg style="left:717.25px;top:8.75px;" width="8.5" height="8.5" viewBox="0 0 24 24"><path d="M4,4L20,20M20,4L4,20" fill="none" stroke="#8a8a8a" stroke-width="1.4" stroke-linecap="round" stroke-linejoin="round"/></svg><svg style="left:13.50px;top:35.50px;" width="15" height="15" viewBox="0 0 24 24"><path d="M20,12H4.5M11,5L4,12l7,7" fill="none" stroke="#CFCFCF" stroke-width="1.7" stroke-linecap="round" stroke-linejoin="round"/></svg><svg style="left:44.75px;top:34.75px;" width="15.5" height="15.5" viewBox="0 0 24 24"><path d="M20,12a8,8 0 1 1 -2.6,-5.9" fill="none" stroke="#2b2b2b" stroke-width="1.7" stroke-linecap="round" stroke-linejoin="round"/><path d="M19.6,2.6v4.4h-4.4" fill="none" stroke="#2b2b2b" stroke-width="1.7" stroke-linecap="round" stroke-linejoin="round"/></svg><svg style="left:76.00px;top:35.00px;" width="15" height="15" viewBox="0 0 24 24"><path d="M4.5,10.5L12,4l7.5,6.5V20h-5v-6h-5v6h-5Z" fill="none" stroke="#2b2b2b" stroke-width="1.7" stroke-linecap="round" stroke-linejoin="round"/></svg><svg style="left:107.00px;top:36.00px;" width="14" height="14" viewBox="0 0 24 24"><circle cx="10" cy="10" r="6.2" fill="none" stroke="#2b2b2b" stroke-width="1.9" stroke-linecap="round" stroke-linejoin="round"/><path d="M14.8,14.8L21,21" fill="none" stroke="#2b2b2b" stroke-width="1.9" stroke-linecap="round" stroke-linejoin="round"/></svg><div style="left:135.00px;top:32.00px;width:319.50px;height:22.00px;background:#fff;border-radius:11px;"></div><svg style="left:145.50px;top:36.50px;" width="13" height="13" viewBox="0 0 24 24"><rect x="5" y="10" width="14" height="10.5" rx="2" fill="none" stroke="#444" stroke-width="1.6" stroke-linecap="round" stroke-linejoin="round"/><path d="M8.5,10V7.5a3.5,3.5 0 0 1 7,0V10" fill="none" stroke="#444" stroke-width="1.6" stroke-linecap="round" stroke-linejoin="round"/><circle cx="12" cy="15.2" r="1.1" fill="#444"/></svg><div style="left:168.00px;top:36.67px;font-size:11.00px;line-height:12.65px;color:#000;white-space:nowrap;transform:scaleX(0.9154);transform-origin:0 50%;"><span style="color:#6b6b6b">https://</span><span style="color:#111">lucid.app</span><span style="color:#6b6b6b">/lucidchart/0520e7d9-c1e2-43f7-a...</span></div><svg style="left:403.25px;top:36.25px;" width="13.5" height="13.5" viewBox="0 0 24 24"><path d="M3.5,19L9.5,4.5h1L16.5,19M5.8,14h8.4" fill="none" stroke="#666" stroke-width="1.5" stroke-linecap="round" stroke-linejoin="round"/><path d="M17.5,5.5a5,5 0 0 1 2,4M19.8,3.2a8,8 0 0 1 2.7,6.2" fill="none" stroke="#666" stroke-width="1.3" stroke-linecap="round" stroke-linejoin="round"/></svg><svg style="left:429.50px;top:35.50px;" width="15" height="15" viewBox="0 0 24 24"><path d="M12,3.5l2.6,5.4 5.9,0.8-4.3,4.1 1,5.9L12,16.9 6.8,19.7l1-5.9L3.5,9.7l5.9-0.8Z" fill="none" stroke="#666" stroke-width="1.5" stroke-linecap="round" stroke-linejoin="round"/></svg><svg style="left:466.50px;top:35.00px;" width="16" height="16" viewBox="0 0 24 24"><path d="M10,4a6.5,6.5 0 0 0 -5.5,4.2L4,12l2,1.2 0,2.8 -1.6,1.8a7,7 0 0 0 5.6,3.2h5.5l1.3,-2.3 2.2,0.3v-3.5a2.3,2.3 0 1 1 0,-4.6V7l-2.3,0.4 -1.5,-2.9Z" fill="none" stroke="#2b2b2b" stroke-width="1.6" stroke-linecap="round" stroke-linejoin="round"/></svg><div style="left:491.30px;top:37.00px;width:1.00px;height:12.00px;background:#CFCFCF;"></div><svg style="left:500.00px;top:35.00px;" width="16" height="16" viewBox="0 0 24 24"><path d="M11,5H5.5a2,2 0 0 0 -2,2v10a2,2 0 0 0 2,2H11M13,5h5.5a2,2 0 0 1 2,2v10a2,2 0 0 1 -2,2H13M12,2.5v19" fill="none" stroke="#2b2b2b" stroke-width="1.6" stroke-linecap="round" stroke-linejoin="round"/></svg><svg style="left:532.00px;top:35.00px;" width="16" height="16" viewBox="0 0 24 24"><path d="M9.5,4l2.2,4.6 5,0.7-3.6,3.5 0.9,5L9.5,15.5 5,17.8l0.9-5L2.3,9.3l5-0.7Z" fill="none" stroke="#2b2b2b" stroke-width="1.5" stroke-linecap="round" stroke-linejoin="round"/><path d="M15.5,13.5h6M16.5,17h5M14.5,20.5h7" fill="none" stroke="#2b2b2b" stroke-width="1.5" stroke-linecap="round" stroke-linejoin="round"/></svg><svg style="left:562.50px;top:35.00px;" width="16" height="16" viewBox="0 0 24 24"><rect x="8" y="8" width="12.5" height="12.5" rx="2.5" fill="none" stroke="#2b2b2b" stroke-width="1.5" stroke-linecap="round" stroke-linejoin="round"/><path d="M16.5,8V6a2.3,2.3 0 0 0 -2.3,-2.3H6A2.3,2.3 0 0 0 3.7,6v8.2A2.3,2.3 0 0 0 6,16.5h2M14.2,11v6.5M11,14.2h6.5" fill="none" stroke="#2b2b2b" stroke-width="1.5" stroke-linecap="round" stroke-linejoin="round"/></svg><svg style="left:592.50px;top:35.00px;" width="16" height="16" viewBox="0 0 24 24"><path d="M4.2,12a8,8 0 1 0 2.4,-5.7L4,9M4,4.5V9h4.5M12,7.5V12.5h4" fill="none" stroke="#2b2b2b" stroke-width="1.5" stroke-linecap="round" stroke-linejoin="round"/></svg><svg style="left:623.00px;top:35.00px;" width="16" height="16" viewBox="0 0 24 24"><path d="M12,20C5,15.5 3,12 3,8.8A4.4,4.4 0 0 1 12,7a4.4,4.4 0 0 1 9,1.8c0,1.2-0.3,2.3-0.9,3.4" fill="none" stroke="#2b2b2b" stroke-width="1.5" stroke-linecap="round" stroke-linejoin="round"/><path d="M5,12.5h3l1.5-3 2.5,6 1.5-3h2" fill="none" stroke="#2b2b2b" stroke-width="1.4" stroke-linecap="round" stroke-linejoin="round"/><circle cx="17.8" cy="17.3" r="4.6" fill="#2E8B3D"/><path d="M15.6,17.4l1.6,1.6 2.8-3" fill="none" stroke="#fff" stroke-width="1.3" stroke-linecap="round" stroke-linejoin="round"/></svg><svg style="left:654.00px;top:35.00px;" width="16" height="16" viewBox="0 0 24 24"><circle cx="9" cy="9.5" r="3" fill="none" stroke="#2b2b2b" stroke-width="1.5" stroke-linecap="round" stroke-linejoin="round"/><path d="M3.5,20v-1a4.5,4.5 0 0 1 4.5,-4.5h2a4.5,4.5 0 0 1 4.5,4.5v1Z" fill="none" stroke="#2b2b2b" stroke-width="1.5" stroke-linecap="round" stroke-linejoin="round"/><rect x="13.5" y="3" width="8" height="6" rx="2" fill="none" stroke="#2b2b2b" stroke-width="1.5" stroke-linecap="round" stroke-linejoin="round"/><path d="M15.5,9v2l2-2" fill="none" stroke="#2b2b2b" stroke-width="1.3" stroke-linecap="round" stroke-linejoin="round"/></svg><svg style="left:686.00px;top:36.00px;" width="14" height="14" viewBox="0 0 24 24"><circle cx="5" cy="12" r="1.6" fill="#2b2b2b"/><circle cx="12" cy="12" r="1.6" fill="#2b2b2b"/><circle cx="19" cy="12" r="1.6" fill="#2b2b2b"/></svg><svg style="left:713.00px;top:33.50px;" width="19" height="19" viewBox="0 0 24 24"><defs><linearGradient id="cpa" x1="0" y1="0" x2="0" y2="1"><stop offset="0" stop-color="#3BA5E8"/><stop offset="1" stop-color="#6FD68C"/></linearGradient><linearGradient id="cpb" x1="0" y1="0" x2="1" y2="1"><stop offset="0" stop-color="#3C6BDD"/><stop offset="1" stop-color="#57A8F0"/></linearGradient></defs><path d="M7,3.5h7.5c1.4,0 2.3,0.9 2,2.2L14.6,14.5c-0.3,1.3-1.4,2-2.6,2H4.3c-1.5,0-2.2-1-1.9-2.3L4.4,5.6C4.7,4.3 5.7,3.5 7,3.5Z" fill="url(#cpa)"/><path d="M11.5,7.5h8c1.5,0 2.3,1 2,2.3l-2,8.6c-0.3,1.3-1.4,2.1-2.7,2.1H9.5c-1.4,0-2.3-0.9-2-2.2L9.4,9.6C9.7,8.3 10.4,7.5 11.5,7.5Z" fill="url(#cpb)"/><path d="M12.8,6.2L10.4,17.5" stroke="#fff" stroke-width="1.5" stroke-linecap="round"/></svg><svg style="left:322px;top:40px" width="7" height="14" viewBox="0 0 7 14"><path d="M1,1h2M4,1h2M3.5,1.5v11M1,13h2M4,13h2" stroke="#111" stroke-width="1.1" fill="none"/></svg><svg style="left:10.00px;top:60.40px;" width="13" height="13" viewBox="0 0 24 24"><circle cx="13" cy="8" r="6.5" fill="#1A7F86"/><circle cx="17" cy="14.5" r="5.5" fill="#2AA5AC"/><circle cx="12" cy="19" r="4" fill="#39C2C9"/><rect x="1.5" y="6.5" width="11" height="11" rx="1.5" fill="#0F6A70"/><text x="7" y="15.5" font-size="9" font-weight="bold" fill="#fff" text-anchor="middle" font-family="Liberation Sans">S</text></svg><div style="left:26.00px;top:61.32px;font-size:9.70px;line-height:11.15px;color:#2b2b2b;white-space:nowrap;transform:scaleX(0.8447);transform-origin:0 50%;">Visio Online Exampl...</div><svg style="left:118.00px;top:60.90px;" width="12" height="12" viewBox="0 0 24 24"><circle cx="12" cy="12" r="11" fill="#1877F2"/><path d="M16.2,15.3l0.5-3.3h-3.2V9.9c0-0.9 0.4-1.8 1.9-1.8h1.4V5.3s-1.3-0.2-2.5-0.2c-2.6,0-4.3,1.6-4.3,4.4V12H7.1v3.3h2.9V23h3.5V15.3Z" fill="#fff"/></svg><div style="left:134.00px;top:61.32px;font-size:9.70px;line-height:11.15px;color:#2b2b2b;white-space:nowrap;transform:scaleX(0.8726);transform-origin:0 50%;">bVisual ltd - Home</div><svg style="left:214.50px;top:60.90px;" width="12" height="12" viewBox="0 0 24 24"><rect x="1" y="1" width="22" height="22" fill="#fff"/><circle cx="8" cy="6.5" r="4" fill="#1B3F94"/><path d="M8,9l9,-3 1,14H9Z" fill="#3B6FD4"/><path d="M13,10h6v11h-6Z" fill="#5B8FE8"/></svg><div style="left:230.50px;top:61.32px;font-size:9.70px;line-height:11.15px;color:#2b2b2b;white-space:nowrap;transform:scaleX(0.8748);transform-origin:0 50%;">bVisual ltd</div><svg style="left:280.50px;top:60.90px;" width="12" height="12" viewBox="0 0 24 24"><rect x="1" y="1" width="22" height="22" fill="#fff"/><circle cx="8" cy="6.5" r="4" fill="#1B3F94"/><path d="M8,9l9,-3 1,14H9Z" fill="#3B6FD4"/><path d="M13,10h6v11h-6Z" fill="#5B8FE8"/></svg><div style="left:296.50px;top:61.32px;font-size:9.70px;line-height:11.15px;color:#2b2b2b;white-space:nowrap;transform:scaleX(0.8690);transform-origin:0 50%;">bVisual - for people...</div><svg style="left:388.50px;top:61.40px;" width="11" height="11" viewBox="0 0 24 24"><rect x="15.5" y="2" width="5.5" height="20" rx="2.7" fill="#F9AB00"/><rect x="8.5" y="9" width="5.5" height="13" rx="2.7" fill="#E37400"/><circle cx="4.8" cy="19.2" r="2.8" fill="#E37400"/></svg><div style="left:404.00px;top:61.32px;font-size:9.70px;line-height:11.15px;color:#2b2b2b;white-space:nowrap;transform:scaleX(0.8502);transform-origin:0 50%;">Analytics</div><svg style="left:449.00px;top:61.90px;" width="10" height="10" viewBox="0 0 24 24"><rect x="0" y="0" width="24" height="24" fill="#fff"/><circle cx="12" cy="12" r="8" fill="none" stroke="#3A66C9" stroke-width="3.2"/><circle cx="12" cy="12" r="2.6" fill="#3A66C9"/><path d="M18,4l3-2" stroke="#fff" stroke-width="2.5"/></svg><div style="left:463.50px;top:61.32px;font-size:9.70px;line-height:11.15px;color:#2b2b2b;white-space:nowrap;transform:scaleX(0.8454);transform-origin:0 50%;">LinkedIn Campaign...</div><svg style="left:625.50px;top:61.40px;" width="11" height="11" viewBox="0 0 24 24"><path d="M8.5,4.5L16,12l-7.5,7.5" fill="none" stroke="#333" stroke-width="2" stroke-linecap="round" stroke-linejoin="round"/></svg><div style="left:646.50px;top:61.00px;width:1.00px;height:12.00px;background:#DADADA;"></div><svg style="left:656.00px;top:59.90px;" width="14" height="14" viewBox="0 0 24 24"><path d="M2.5,6.5a2,2 0 0 1 2,-2h4.2l2.3,2.5H19.5a2,2 0 0 1 2,2V18a2,2 0 0 1 -2,2h-15a2,2 0 0 1 -2,-2Z" fill="#F5CF55" stroke="#D9A521" stroke-width="1.2"/></svg><div style="left:673.00px;top:61.32px;font-size:9.70px;line-height:11.15px;color:#2b2b2b;white-space:nowrap;transform:scaleX(0.8693);transform-origin:0 50%;">Other favorites</div></div></div>
<div class="w" style="left:739px;top:4.6px;width:795.7px;height:859.6px;border-radius:7px;background:#F7F7F7;box-shadow:0 0 3px rgba(0,0,0,.5);"><div style="left:-739px;top:-4.6px;width:1536px;height:865px;"><div style="left:739.00px;top:0.00px;width:800.00px;height:33.00px;background:#D0D0D0;"></div><div style="left:739.00px;top:33.00px;width:800.00px;height:50.00px;background:#F7F7F7;"></div><div style="left:1505.00px;top:83.00px;width:31.00px;height:782.00px;background:#F7F7F7;"></div><div class="w" style="left:743px;top:83px;width:762px;height:777px;border-radius:7px;background:#F5F5F5;"><div style="left:-743px;top:-83px;width:1536px;height:865px;"><div style="left:743.00px;top:83.00px;width:762.00px;height:152.00px;background:#F5F5F5;"></div><svg style="left:796.7px;top:235px" width="702" height="558"><defs><pattern id="gm" x="3.10" y="3.70" width="12.04" height="12.04" patternUnits="userSpaceOnUse"><path d="M0.5,0V12.04M0,0.5H12.04" stroke="#E9E9E9" stroke-width="1" fill="none"/></pattern><pattern id="gM" x="3.10" y="3.70" width="60.199999999999996" height="60.199999999999996" patternUnits="userSpaceOnUse"><path d="M0.5,0V60.199999999999996M0,0.5H60.199999999999996" stroke="#D8D8D8" stroke-width="1" fill="none"/></pattern></defs><rect width="702" height="558" fill="#fff"/><rect width="702" height="558" fill="url(#gm)"/><rect width="702" height="558" fill="url(#gM)"/></svg><svg style="left:796.7px;top:235px" width="702" height="558"><g stroke="#7A7A7A" stroke-width="1" stroke-dasharray="5.2 2.4" fill="none"><path d="M28.799999999999955,0V558"/><path d="M511.0,0V558"/><path d="M0,101.19999999999999H702"/><path d="M0,462.70000000000005H702"/></g></svg><div style="left:826.25px;top:369.4px;width:0;height:0;"><div style="left:0;top:0;width:463.55px;height:309.90px;border:0.8px solid #C0C1CB;box-sizing:border-box;"></div><div style="left:0.00px;top:0.00px;width:29.35px;height:309.90px;background:#CDD0D8;"></div><div style="left:0.00px;top:72.50px;width:463.55px;height:0.80px;background:#C0C1CB;"></div><div style="left:0.00px;top:115.60px;width:463.55px;height:0.80px;background:#C0C1CB;"></div><div style="left:0.00px;top:207.40px;width:463.55px;height:0.80px;background:#C0C1CB;"></div><div style="left:-21.78px;top:21.78px;width:72.90px;height:29.35px;transform:rotate(-90deg);display:flex;align-items:center;justify-content:center;text-align:center;font-size:6.65px;line-height:7.2px;font-weight:bold;color:#333;">Presentation<br>layer</div><div style="left:-6.87px;top:79.78px;width:43.10px;height:29.35px;transform:rotate(-90deg);display:flex;align-items:center;justify-content:center;text-align:center;font-size:6.65px;line-height:7.2px;font-weight:bold;color:#333;">Knowledge<br>processing<br>layer</div><div style="left:-31.23px;top:147.23px;width:91.80px;height:29.35px;transform:rotate(-90deg);display:flex;align-items:center;justify-content:center;text-align:center;font-size:6.65px;line-height:7.2px;font-weight:bold;color:#333;">Information<br>integration layer</div><div style="left:-36.37px;top:244.18px;width:102.10px;height:29.35px;transform:rotate(-90deg);display:flex;align-items:center;justify-content:center;text-align:center;font-size:6.65px;line-height:7.2px;font-weight:bold;color:#333;">Data and information<br>sources and tools</div><svg style="left:9.35px;top:3.80px" width="9.6" height="10.8" viewBox="0 0 8 9"><g transform="rotate(-90 4 4.5)"><circle cx="4" cy="2.4" r="2.2" fill="#111"/><path d="M0.2,9 C0.2,5.5 2,4.6 4,4.6 C6,4.6 7.8,5.5 7.8,9 Z" fill="#111"/></g></svg><div style="left:34.35px;top:5.00px;width:22.70px;height:58.70px;background:#E3A35F;border-radius:1.2px;display:flex;flex-direction:column;justify-content:center;align-items:center;text-align:center;font-size:5.33px;line-height:5.36px;color:#fff;box-sizing:border-box;padding:0 0.5px;"><div style="position:static;font-weight:bold;">Portal</div></div><div style="left:65.65px;top:5.00px;width:57.70px;height:58.70px;background:#E3A35F;border-radius:1.2px;display:flex;flex-direction:column;justify-content:center;align-items:center;text-align:center;font-size:5.33px;line-height:5.36px;color:#fff;box-sizing:border-box;padding:0 0.5px;"><div style="position:static;font-weight:bold;">Change and release</div><div style="position:static;font-weight:bold;">view</div><div style="position:static;">Schedules/plans</div><div style="position:static;">Change request status</div><div style="position:static;">Change advisory</div><div style="position:static;">board agenda and</div><div style="position:static;">minutes</div></div><div style="left:132.05px;top:5.00px;width:57.70px;height:58.70px;background:#E3A35F;border-radius:1.2px;display:flex;flex-direction:column;justify-content:center;align-items:center;text-align:center;font-size:5.33px;line-height:5.36px;color:#fff;box-sizing:border-box;padding:0 0.5px;"><div style="position:static;font-weight:bold;">Asset management</div><div style="position:static;font-weight:bold;">view</div><div style="position:static;">Financial asset</div><div style="position:static;">Asset status reports</div><div style="position:static;">Asset statements and</div><div style="position:static;">bills</div><div style="position:static;">License management</div><div style="position:static;">Asset performance</div></div><div style="left:198.75px;top:5.00px;width:57.70px;height:58.70px;background:#E3A35F;border-radius:1.2px;display:flex;flex-direction:column;justify-content:center;align-items:center;text-align:center;font-size:5.33px;line-height:5.36px;color:#fff;box-sizing:border-box;padding:0 0.5px;"><div style="position:static;font-weight:bold;">Configuration</div><div style="position:static;font-weight:bold;">lifecycle view</div><div style="position:static;">Project configurations</div><div style="position:static;">Service, strategy,</div><div style="position:static;">design, transition,</div><div style="position:static;">operations</div><div style="position:static;">configuration and</div><div style="position:static;">baselines and changes</div></div><div style="left:265.35px;top:5.00px;width:57.70px;height:58.70px;background:#E3A35F;border-radius:1.2px;display:flex;flex-direction:column;justify-content:center;align-items:center;text-align:center;font-size:5.33px;line-height:5.36px;color:#fff;box-sizing:border-box;padding:0 0.5px;"><div style="position:static;font-weight:bold;">Technical</div><div style="position:static;font-weight:bold;">configuration view</div><div style="position:static;">Service applications</div><div style="position:static;">Application</div><div style="position:static;">Environment</div><div style="position:static;">Test Environment</div><div style="position:static;">Infrastructure</div></div><div style="left:331.75px;top:5.00px;width:57.70px;height:58.70px;background:#E3A35F;border-radius:1.2px;display:flex;flex-direction:column;justify-content:center;align-items:center;text-align:center;font-size:5.33px;line-height:5.36px;color:#fff;box-sizing:border-box;padding:0 0.5px;"><div style="position:static;font-weight:bold;">Quality management</div><div style="position:static;font-weight:bold;">view</div><div style="position:static;">Asset and</div><div style="position:static;">configuration</div><div style="position:static;">management policies,</div><div style="position:static;">processes,</div><div style="position:static;">procedures, forms,</div><div style="position:static;">templates, checklists</div></div><div style="left:398.35px;top:5.00px;width:57.70px;height:58.70px;background:#E3A35F;border-radius:1.2px;display:flex;flex-direction:column;justify-content:center;align-items:center;text-align:center;font-size:5.33px;line-height:5.36px;color:#fff;box-sizing:border-box;padding:0 0.5px;"><div style="position:static;font-weight:bold;">Service desk view</div><div style="position:static;">User assets</div><div style="position:static;">User configuration,</div><div style="position:static;">changes, releases,</div><div style="position:static;">asset and</div><div style="position:static;">configuration item and</div><div style="position:static;">related incidents,</div><div style="position:static;">problems,</div><div style="position:static;">workarounds, changes</div></div><div style="left:59.75px;top:79.60px;width:44.60px;height:31.80px;background:#577AC9;border-radius:1.2px;display:flex;flex-direction:column;justify-content:center;align-items:center;text-align:center;font-size:5.33px;line-height:5.36px;color:#fff;box-sizing:border-box;padding:0 0.5px;"><div style="position:static;font-weight:bold;">Query and</div><div style="position:static;font-weight:bold;">analysis</div></div><div style="left:120.05px;top:79.60px;width:44.80px;height:31.80px;background:#577AC9;border-radius:1.2px;display:flex;flex-direction:column;justify-content:center;align-items:center;text-align:center;font-size:5.33px;line-height:5.36px;color:#fff;box-sizing:border-box;padding:0 0.5px;"><div style="position:static;font-weight:bold;">Reporting</div></div><div style="left:180.75px;top:79.60px;width:100.20px;height:31.80px;background:#577AC9;border-radius:1.2px;display:flex;flex-direction:column;justify-content:center;align-items:center;text-align:center;font-size:5.33px;line-height:5.36px;color:#fff;box-sizing:border-box;padding:0 0.5px;"><div style="position:static;font-weight:bold;">Performance management</div><div style="position:static;font-weight:bold;">Forecasting, planning, budgeting</div></div><div style="left:296.85px;top:79.60px;width:44.60px;height:31.80px;background:#577AC9;border-radius:1.2px;display:flex;flex-direction:column;justify-content:center;align-items:center;text-align:center;font-size:5.33px;line-height:5.36px;color:#fff;box-sizing:border-box;padding:0 0.5px;"><div style="position:static;font-weight:bold;">Modeling</div></div><div style="left:357.45px;top:79.60px;width:44.60px;height:31.80px;background:#577AC9;border-radius:1.2px;display:flex;flex-direction:column;justify-content:center;align-items:center;text-align:center;font-size:5.33px;line-height:5.36px;color:#fff;box-sizing:border-box;padding:0 0.5px;"><div style="position:static;font-weight:bold;">Monitoring</div><div style="position:static;">Scorecards,</div><div style="position:static;">dashboards,</div><div style="position:static;">alerting</div></div><svg style="left:85.45px;top:119.70px" width="321.70" height="50.60" viewBox="0 0 321.70 50.60"><path d="M0,4.4 A160.85000000000002,4.4 0 0 1 321.70000000000005,4.4 L321.70000000000005,46.200000000000024 A160.85000000000002,4.4 0 0 1 0,46.200000000000024 Z" fill="#DE8683"/><path d="M0,4.4 A160.85000000000002,4.4 0 0 0 321.70000000000005,4.4" fill="none" stroke="#F7E1E0" stroke-width="0.8"/></svg><div style="left:145.75px;top:122.20px;width:200px;white-space:nowrap;text-align:center;font-size:5.33px;line-height:5.4px;color:#fff;">Customer/user - Service - Application - Infrastructure mapping</div><div style="left:12.15px;top:138.00px;width:200px;white-space:nowrap;text-align:center;font-size:5.33px;line-height:5.4px;color:#fff;">Service<br>portfolio</div><div style="left:63.75px;top:148.60px;width:200px;white-space:nowrap;text-align:center;font-size:5.33px;line-height:5.4px;color:#fff;">Service<br>package</div><div style="left:145.75px;top:147.40px;width:200px;white-space:nowrap;text-align:center;font-size:5.33px;line-height:5.4px;color:#fff;font-weight:bold;">Integrated asset and configuration information</div><div style="left:277.25px;top:138.50px;width:200px;white-space:nowrap;text-align:center;font-size:5.33px;line-height:5.4px;color:#fff;">Service release</div><div style="left:236.25px;top:150.90px;width:200px;white-space:nowrap;text-align:center;font-size:5.33px;line-height:5.4px;color:#fff;">Service change</div><div style="left:34.65px;top:175.60px;width:50.30px;height:27.40px;background:#DE8683;border-radius:1.2px;display:flex;flex-direction:column;justify-content:center;align-items:center;text-align:center;font-size:5.33px;line-height:5.36px;color:#fff;box-sizing:border-box;padding:0 0.5px;"><div style="position:static;font-weight:bold;">Common process</div><div style="position:static;font-weight:bold;">data and</div><div style="position:static;font-weight:bold;">information model</div></div><div style="left:96.85px;top:179.60px;width:51.10px;height:20.20px;background:#DE8683;border-radius:1.2px;display:flex;flex-direction:column;justify-content:center;align-items:center;text-align:center;font-size:5.33px;line-height:5.36px;color:#fff;box-sizing:border-box;padding:0 0.5px;"><div style="position:static;font-weight:bold;">Schema mapping</div></div><div style="left:159.65px;top:179.60px;width:50.80px;height:20.20px;background:#DE8683;border-radius:1.2px;display:flex;flex-direction:column;justify-content:center;align-items:center;text-align:center;font-size:5.33px;line-height:5.36px;color:#fff;box-sizing:border-box;padding:0 0.5px;"><div style="position:static;font-weight:bold;">Meta data</div><div style="position:static;font-weight:bold;">management</div></div><div style="left:222.45px;top:179.60px;width:50.60px;height:20.20px;background:#DE8683;border-radius:1.2px;display:flex;flex-direction:column;justify-content:center;align-items:center;text-align:center;font-size:5.33px;line-height:5.36px;color:#fff;box-sizing:border-box;padding:0 0.5px;"><div style="position:static;font-weight:bold;">Data reconciliation</div></div><div style="left:280.25px;top:179.60px;width:50.80px;height:20.20px;background:#DE8683;border-radius:1.2px;display:flex;flex-direction:column;justify-content:center;align-items:center;text-align:center;font-size:5.33px;line-height:5.36px;color:#fff;box-sizing:border-box;padding:0 0.5px;"><div style="position:static;font-weight:bold;">Data</div><div style="position:static;font-weight:bold;">synchronization</div></div><div style="left:342.75px;top:179.60px;width:51.00px;height:20.20px;background:#DE8683;border-radius:1.2px;display:flex;flex-direction:column;justify-content:center;align-items:center;text-align:center;font-size:5.33px;line-height:5.36px;color:#fff;box-sizing:border-box;padding:0 0.5px;"><div style="position:static;font-weight:bold;">Extract, transform,</div><div style="position:static;font-weight:bold;">load</div></div><div style="left:400.75px;top:179.60px;width:50.50px;height:20.20px;background:#DE8683;border-radius:1.2px;display:flex;flex-direction:column;justify-content:center;align-items:center;text-align:center;font-size:5.33px;line-height:5.36px;color:#fff;box-sizing:border-box;padding:0 0.5px;"><div style="position:static;font-weight:bold;">Mining</div></div><div style="left:34.65px;top:203.00px;width:416.60px;height:9.80px;background:#D0D1D3;border-radius:1.2px;display:flex;flex-direction:column;justify-content:center;align-items:center;text-align:center;font-size:5.2px;line-height:6px;color:#222;box-sizing:border-box;padding:0 0.5px;"><div style="position:static;font-weight:bold;">Data integration</div></div><div style="left:38.35px;top:217.10px;width:52.40px;height:83.50px;background:#6C6EF7;border-radius:1.2px;display:flex;flex-direction:column;justify-content:center;align-items:center;text-align:center;font-size:5.33px;line-height:5.36px;color:#fff;box-sizing:border-box;padding:0 0.5px;"><div style="position:static;font-weight:bold;">Structured</div></div><div style="left:42.75px;top:221.60px;width:43.00px;height:22.60px;background:#DEDFFB;border-radius:1.5px;display:flex;flex-direction:column;justify-content:center;align-items:center;text-align:center;font-size:5.33px;line-height:5.36px;color:#333;box-sizing:border-box;padding:0 0.5px;"><div style="position:static;">Project</div><div style="position:static;">document</div><div style="position:static;">filestore</div></div><div style="left:42.75px;top:273.60px;width:43.00px;height:22.50px;background:#DEDFFB;border-radius:1.5px;display:flex;flex-direction:column;justify-content:center;align-items:center;text-align:center;font-size:5.33px;line-height:5.36px;color:#333;box-sizing:border-box;padding:0 0.5px;"><div style="position:static;">Project software</div></div><div style="left:99.25px;top:217.10px;width:50.80px;height:83.50px;background:#6C6EF7;border-radius:1.2px;display:flex;flex-direction:column;justify-content:center;align-items:center;text-align:center;font-size:5.33px;line-height:5.36px;color:#fff;box-sizing:border-box;padding:0 0.5px;justify-content:flex-start;padding-top:0.8px;"><div style="position:static;font-weight:bold;">Definitive media</div><div style="position:static;font-weight:bold;">library</div></div><div style="left:103.25px;top:233.00px;width:42.80px;height:16.60px;background:#DEDFFB;border-radius:1.5px;display:flex;flex-direction:column;justify-content:center;align-items:center;text-align:center;font-size:5.33px;line-height:5.36px;color:#333;box-sizing:border-box;padding:0 0.5px;"><div style="position:static;">Definitive</div><div style="position:static;">document library</div></div><div style="left:103.25px;top:252.60px;width:42.80px;height:21.40px;background:#DEDFFB;border-radius:1.5px;display:flex;flex-direction:column;justify-content:center;align-items:center;text-align:center;font-size:5.33px;line-height:5.36px;color:#333;box-sizing:border-box;padding:0 0.5px;"><div style="position:static;">Definitive media</div><div style="position:static;">library 1</div></div><div style="left:103.25px;top:276.60px;width:42.80px;height:21.30px;background:#DEDFFB;border-radius:1.5px;display:flex;flex-direction:column;justify-content:center;align-items:center;text-align:center;font-size:5.33px;line-height:5.36px;color:#333;box-sizing:border-box;padding:0 0.5px;"><div style="position:static;">Definitive media</div><div style="position:static;">library 2</div></div><div style="left:158.05px;top:217.10px;width:53.70px;height:83.50px;background:#D2D3D5;border-radius:1.2px;display:flex;flex-direction:column;justify-content:center;align-items:center;text-align:center;font-size:5.33px;line-height:5.36px;color:#333;box-sizing:border-box;padding:0 0.5px;justify-content:flex-start;padding-top:0.8px;border:0.7px dashed #8a8a8a;"><div style="position:static;">CMDBs</div></div><svg style="left:163.75px;top:232.60px" width="23.50" height="17.00" viewBox="0 0 23.50 17.00"><path d="M0,2.2 A11.75,2.2 0 0 1 23.5,2.2 L23.5,14.8 A11.75,2.2 0 0 1 0,14.8 Z" fill="#DEDFFB"/><ellipse cx="11.75" cy="2.2" rx="11.75" ry="2.2" fill="#EBEBFD"/></svg><div style="left:163.75px;top:234.10px;width:23.50px;height:17.00px;display:flex;align-items:center;justify-content:center;font-size:5.2px;color:#333;">CMDB1</div><svg style="left:185.15px;top:254.60px" width="23.40" height="17.50" viewBox="0 0 23.40 17.50"><path d="M0,2.2 A11.699999999999989,2.2 0 0 1 23.399999999999977,2.2 L23.399999999999977,15.3 A11.699999999999989,2.2 0 0 1 0,15.3 Z" fill="#DEDFFB"/><ellipse cx="11.699999999999989" cy="2.2" rx="11.699999999999989" ry="2.2" fill="#EBEBFD"/></svg><div style="left:185.15px;top:256.10px;width:23.40px;height:17.50px;display:flex;align-items:center;justify-content:center;font-size:5.2px;color:#333;">CMDB2</div><svg style="left:163.75px;top:278.60px" width="23.50" height="17.50" viewBox="0 0 23.50 17.50"><path d="M0,2.2 A11.75,2.2 0 0 1 23.5,2.2 L23.5,15.3 A11.75,2.2 0 0 1 0,15.3 Z" fill="#DEDFFB"/><ellipse cx="11.75" cy="2.2" rx="11.75" ry="2.2" fill="#EBEBFD"/></svg><div style="left:163.75px;top:280.10px;width:23.50px;height:17.50px;display:flex;align-items:center;justify-content:center;font-size:5.2px;color:#333;">CMDB3</div><div style="left:219.75px;top:217.10px;width:52.50px;height:83.50px;background:#6C6EF7;border-radius:1.2px;display:flex;flex-direction:column;justify-content:center;align-items:center;text-align:center;font-size:5.33px;line-height:5.36px;color:#fff;box-sizing:border-box;padding:0 0.5px;"><div style="position:static;font-weight:bold;">Discovery, asset</div><div style="position:static;font-weight:bold;">management and</div><div style="position:static;font-weight:bold;">audit tools</div></div><div style="left:280.75px;top:217.10px;width:52.40px;height:83.50px;background:#6C6EF7;border-radius:1.2px;display:flex;flex-direction:column;justify-content:center;align-items:center;text-align:center;font-size:5.33px;line-height:5.36px;color:#fff;box-sizing:border-box;padding:0 0.5px;"><div style="position:static;font-weight:bold;">Software</div><div style="position:static;font-weight:bold;">configuration</div><div style="position:static;font-weight:bold;">management</div></div><div style="left:341.75px;top:217.10px;width:52.30px;height:83.50px;background:#6C6EF7;border-radius:1.2px;display:flex;flex-direction:column;justify-content:center;align-items:center;text-align:center;font-size:5.33px;line-height:5.36px;color:#fff;box-sizing:border-box;padding:0 0.5px;"><div style="position:static;">Platform</div><div style="position:static;">configuration tools</div><div style="position:static;">E.g., Storage</div><div style="position:static;">database</div><div style="position:static;">Middleware network</div><div style="position:static;">Mainframe</div><div style="position:static;">Distributed desktop</div><div style="position:static;">Mobile</div></div><div style="left:402.55px;top:217.10px;width:52.70px;height:83.50px;background:#6C6EF7;border-radius:1.2px;display:flex;flex-direction:column;justify-content:center;align-items:center;text-align:center;font-size:5.33px;line-height:5.36px;color:#fff;box-sizing:border-box;padding:0 0.5px;"><div style="position:static;font-weight:bold;">Enterprise</div><div style="position:static;font-weight:bold;">applications</div><div style="position:static;">Access</div><div style="position:static;">management</div><div style="position:static;">Human resources</div><div style="position:static;">Supply chain</div><div style="position:static;">management</div><div style="position:static;">Customer</div><div style="position:static;">relationship</div><div style="position:static;">management</div></div><div style="left:338.75px;top:314.20px;font-size:3.9px;line-height:4.1px;color:#333;white-space:nowrap;">ITIL Continual Service Improvement, Office of Government Commerce, &copy;<br>2007. This information is licensed under the terms of the Open Government<br>Licence http://www.nationalarchives.gov.uk/doc/open-government-licence</div><div style="left:140.15px;top:-36.70px;width:200px;text-align:center;font-size:8.3px;line-height:10px;font-weight:bold;color:#A3A6B3;white-space:nowrap;">Configuration management system example</div><div style="left:147.65px;top:-25.30px;width:188.80px;height:0.80px;background:#B4B7C4;"></div><div style="left:140.15px;top:-24.80px;width:200px;text-align:center;font-size:4.6px;line-height:5px;color:#B3B6C0;white-space:nowrap;">David Parker &nbsp;|&nbsp; July 30, 2024</div></div><div style="left:869.20px;top:371.70px;width:5.40px;height:5.40px;background:#fff;border:1px solid #8DC63F;border-radius:50%;"></div><div style="left:869.20px;top:430.60px;width:5.40px;height:5.40px;background:#fff;border:1px solid #8DC63F;border-radius:50%;"></div><div style="left:857.70px;top:400.90px;width:5.40px;height:5.40px;background:#fff;border:1px solid #8DC63F;border-radius:50%;"></div><div style="left:880.70px;top:400.90px;width:5.40px;height:5.40px;background:#fff;border:1px solid #8DC63F;border-radius:50%;"></div><svg style="left:974px;top:469.9px" width="32" height="32" viewBox="-16 -16 32 32"><g transform="rotate(0)"><path d="M-11.8,0L0,-12.6 11.8,0Z" fill="rgba(80,80,90,0.30)" stroke="#fff" stroke-width="1.1" stroke-linejoin="miter"/><circle cx="0" cy="0" r="3.9" fill="rgba(150,150,150,0.75)" stroke="#fff" stroke-width="1.2"/></g></svg><svg style="left:924.3px;top:507.4px" width="32" height="32" viewBox="-16 -16 32 32"><g transform="rotate(-90)"><path d="M-11.8,0L0,-12.6 11.8,0Z" fill="rgba(80,80,90,0.30)" stroke="#fff" stroke-width="1.1" stroke-linejoin="miter"/><circle cx="0" cy="0" r="3.9" fill="rgba(150,150,150,0.75)" stroke="#fff" stroke-width="1.2"/></g></svg><svg style="left:1023.7px;top:507.4px" width="32" height="32" viewBox="-16 -16 32 32"><g transform="rotate(90)"><path d="M-11.8,0L0,-12.6 11.8,0Z" fill="rgba(80,80,90,0.30)" stroke="#fff" stroke-width="1.1" stroke-linejoin="miter"/><circle cx="0" cy="0" r="3.9" fill="rgba(150,150,150,0.75)" stroke="#fff" stroke-width="1.2"/></g></svg><svg style="left:974px;top:545px" width="32" height="32" viewBox="-16 -16 32 32"><g transform="rotate(180)"><path d="M-11.8,0L0,-12.6 11.8,0Z" fill="rgba(80,80,90,0.30)" stroke="#fff" stroke-width="1.1" stroke-linejoin="miter"/><circle cx="0" cy="0" r="3.9" fill="rgba(150,150,150,0.75)" stroke="#fff" stroke-width="1.2"/></g></svg><div style="left:1356.50px;top:311.60px;width:141.50px;height:217.40px;background:#F9F9F9;"></div><div style="left:1369.00px;top:321.18px;font-size:8.03px;line-height:9.24px;color:#2b2b2b;white-space:nowrap;font-weight:bold;">Learn how to edit this template</div><div style="left:1368.30px;top:339.10px;width:1.80px;height:1.80px;background:#222;border-radius:50%;"></div><div style="left:1392.40px;top:336.22px;font-size:6.6px;line-height:6.77px;color:#3f3f3f;white-space:nowrap;font-style:italic;"><b>Add text to a shape</b> by</div><div style="left:1368.00px;top:342.99px;font-size:6.6px;line-height:6.77px;color:#3f3f3f;white-space:nowrap;font-style:italic;">selecting it and typing.</div><div style="left:1368.30px;top:352.64px;width:1.80px;height:1.80px;background:#222;border-radius:50%;"></div><div style="left:1392.40px;top:349.75px;font-size:6.6px;line-height:6.77px;color:#3f3f3f;white-space:nowrap;font-style:italic;">To <b>format shapes</b> as you'd like,</div><div style="left:1368.00px;top:356.52px;font-size:6.6px;line-height:6.77px;color:#3f3f3f;white-space:nowrap;font-style:italic;">click on a shape and then click "Shape</div><div style="left:1368.00px;top:363.29px;font-size:6.6px;line-height:6.77px;color:#3f3f3f;white-space:nowrap;font-style:italic;">Options"&nbsp;&nbsp;&nbsp;&nbsp;&nbsp;, "Fill Color"&nbsp;&nbsp;&nbsp;&nbsp;&nbsp;&nbsp;&nbsp;, and "Line</div><div style="left:1368.00px;top:370.06px;font-size:6.6px;line-height:6.77px;color:#3f3f3f;white-space:nowrap;font-style:italic;">Color"&nbsp;&nbsp;&nbsp; on the properties bar at the top</div><div style="left:1368.00px;top:376.83px;font-size:6.6px;line-height:6.77px;color:#3f3f3f;white-space:nowrap;font-style:italic;">of the canvas.</div><div style="left:1368.30px;top:386.49px;width:1.80px;height:1.80px;background:#222;border-radius:50%;"></div><div style="left:1392.40px;top:383.60px;font-size:6.6px;line-height:6.77px;color:#3f3f3f;white-space:nowrap;font-style:italic;">Hover over a shape and click on</div><div style="left:1368.00px;top:390.37px;font-size:6.6px;line-height:6.77px;color:#3f3f3f;white-space:nowrap;font-style:italic;">any red circle&nbsp;&nbsp;&nbsp;&nbsp;to <b>add lines</b>.</div><div style="left:1368.30px;top:400.03px;width:1.80px;height:1.80px;background:#222;border-radius:50%;"></div><div style="left:1392.40px;top:397.14px;font-size:6.6px;line-height:6.77px;color:#3f3f3f;white-space:nowrap;font-style:italic;"><b>Add text to a line</b> by double-</div><div style="left:1368.00px;top:403.91px;font-size:6.6px;line-height:6.77px;color:#3f3f3f;white-space:nowrap;font-style:italic;">clicking the text or anywhere on the line</div><div style="left:1368.00px;top:410.68px;font-size:6.6px;line-height:6.77px;color:#3f3f3f;white-space:nowrap;font-style:italic;">and typing.</div><div style="left:1368.30px;top:420.34px;width:1.80px;height:1.80px;background:#222;border-radius:50%;"></div><div style="left:1392.40px;top:417.45px;font-size:6.6px;line-height:6.77px;color:#3f3f3f;white-space:nowrap;font-style:italic;">To <b>format lines</b>, click on a line</div><div style="left:1368.00px;top:424.22px;font-size:6.6px;line-height:6.77px;color:#3f3f3f;white-space:nowrap;font-style:italic;">and use the properties bar at the top of</div><div style="left:1368.00px;top:430.99px;font-size:6.6px;line-height:6.77px;color:#3f3f3f;white-space:nowrap;font-style:italic;">the canvas.</div><svg style="left:1431px;top:369px" width="6" height="5" viewBox="0 0 6 5"><rect x="0.500" y="0.500" width="5" height="4" fill="none" stroke="#555" stroke-width="0.700"/></svg><svg style="left:1475.500px;top:368.500px" width="7" height="7" viewBox="0 0 7 7"><path d="M0.500,4L3.500,1 6.500,4 3.500,6.500Z" fill="#222"/></svg><svg style="left:1430px;top:378px" width="6" height="5" viewBox="0 0 6 5"><path d="M0.500,4.500L5,0.500M0.500,4.500h2" stroke="#222" stroke-width="0.900" fill="none"/></svg><div style="left:1424.00px;top:404.00px;width:2.00px;height:2.00px;border:0.500px solid #E33;border-radius:50%;"></div><div style="left:1356.500px;top:470.800px;width:141.500px;text-align:center;font-size:6.400px;line-height:7px;font-weight:bold;color:#2b2b2b;">Tutorials</div><div style="left:1356.500px;top:478.600px;width:141.500px;text-align:center;font-size:6.700px;line-height:7px;font-style:italic;color:#3f3f3f;">(Hold Shift + &#8984; or Ctrl, then click)</div><div style="left:1367.80px;top:494.30px;width:120.60px;height:24.40px;background:#6E717C;border-radius:7px;"></div><div style="left:1367.800px;top:502px;width:120.600px;text-align:center;font-size:6.700px;line-height:7.500px;color:#fff;">Watch Lucidchart basic tutorials</div><svg style="left:1471.5px;top:505px" width="14.4" height="16.0" viewBox="0 0 18 20"><path d="M5.500,1.200c0.900-0.500 2,0 2.300,1L9.600,8l1-0.300c0.800-0.200 1.500,0.200 1.800,0.900l0.800-0.200c0.800-0.200 1.500,0.300 1.700,1l0.500-0.100c0.900-0.200 1.600,0.400 1.800,1.200l0.600,3.500c0.300,1.600-0.400,3.200-1.900,3.900l-3,1.300c-1.500,0.600-3.200,0.200-4.200-1L4.500,13c-0.600-0.700-0.400-1.700 0.300-2.200 0.700-0.400 1.500-0.200 2,0.400l0.700,0.900L4.700,3.300C4.400,2.500 4.700,1.600 5.500,1.200Z" fill="#fff" stroke="#111" stroke-width="1.100" stroke-linejoin="round" transform="rotate(-18 9 10)"/></svg><div style="left:743.00px;top:235.00px;width:53.70px;height:597.00px;background:#EDEDEB;"></div><div style="left:752.00px;top:185.00px;width:743.00px;height:50.00px;background:#fff;border-radius:10px;box-shadow:0 1px 3px rgba(0,0,0,.18);"></div><div style="left:1498.00px;top:235.00px;width:7.00px;height:563.00px;background:#F3F3F3;"></div><div style="left:796.70px;top:792.50px;width:708.00px;height:6.00px;background:#F3F3F3;"></div><div style="left:796.70px;top:798.00px;width:708.00px;height:34.50px;background:#fff;"></div><div style="left:796.70px;top:797.50px;width:708.00px;height:1.00px;background:#D2D2D2;"></div><div style="left:743.00px;top:832.50px;width:762.00px;height:28.00px;background:#F3F3F3;"></div><div style="left:743.00px;top:832.00px;width:762.00px;height:1.00px;background:#E0E0E0;"></div><svg style="left:758px;top:100px" width="24" height="24" viewBox="0 0 24 24"><circle cx="4.9" cy="4.6" r="1.85" fill="#1b1b1b"/><circle cx="4.9" cy="12.0" r="1.85" fill="#1b1b1b"/><circle cx="4.9" cy="19.4" r="1.85" fill="#1b1b1b"/><circle cx="12.2" cy="4.6" r="1.85" fill="#1b1b1b"/><circle cx="12.2" cy="12.0" r="1.85" fill="#1b1b1b"/><circle cx="12.2" cy="19.4" r="1.85" fill="#1b1b1b"/><circle cx="19.6" cy="4.6" r="1.85" fill="#1b1b1b"/><circle cx="19.6" cy="12.0" r="1.85" fill="#1b1b1b"/><circle cx="19.6" cy="19.4" r="1.85" fill="#1b1b1b"/></svg><svg style="left:805.10px;top:102.10px" width="20.00" height="21.00" viewBox="0 0 20 21"><path d="M11,0.700L17.500,7.300 11,13.500 4.500,7.300Z" fill="#62A4F2"/><rect x="12" y="5.900" width="7.900" height="9.400" rx="1" fill="#4E83DC"/><circle cx="11" cy="16.100" r="4.700" fill="#27459C"/><rect x="0.100" y="4.350" width="12.500" height="12.500" rx="1.100" fill="#3D5DC3"/><path d="M3.300,7.300L6.350,14 9.400,7.300" fill="none" stroke="#fff" stroke-width="1.500" stroke-linejoin="miter"/></svg><div style="left:903.00px;top:103.68px;font-size:17.60px;line-height:20.24px;color:#2b2b2b;white-space:nowrap;transform:scaleX(0.9688);transform-origin:0 50%;">Configuration management system example</div><div style="left:1244.30px;top:103.68px;font-size:17.60px;line-height:20.24px;color:#2b2b2b;white-space:nowrap;transform:scaleX(0.9724);transform-origin:0 50%;">-</div><div style="left:1258.70px;top:103.68px;font-size:17.60px;line-height:20.24px;color:#2b2b2b;white-space:nowrap;transform:scaleX(0.8877);transform-origin:0 50%;">Saved</div><svg style="left:1306.50px;top:108.00px;" width="13" height="13" viewBox="0 0 24 24"><path d="M4.5,8.5L12,16l7.5-7.5" fill="none" stroke="#444" stroke-width="1.2" stroke-linecap="round" stroke-linejoin="round"/></svg><svg style="left:1406.00px;top:102.50px;" width="21" height="21" viewBox="0 0 24 24"><path d="M21.86,10.31 L21.86,13.69 L19.40,13.73 L18.46,16.01 L20.17,17.77 L17.77,20.17 L16.01,18.46 L13.73,19.40 L13.69,21.86 L10.31,21.86 L10.27,19.40 L7.99,18.46 L6.23,20.17 L3.83,17.77 L5.54,16.01 L4.60,13.73 L2.14,13.69 L2.14,10.31 L4.60,10.27 L5.54,7.99 L3.83,6.23 L6.23,3.83 L7.99,5.54 L10.27,4.60 L10.31,2.14 L13.69,2.14 L13.73,4.60 L16.01,5.54 L17.77,3.83 L20.17,6.23 L18.46,7.99 L19.40,10.27Z" fill="none" stroke="#2b2b2b" stroke-width="1.3" stroke-linecap="round" stroke-linejoin="round"/><circle cx="12" cy="12" r="3.300" fill="none" stroke="#2b2b2b" stroke-width="1.3" stroke-linecap="round" stroke-linejoin="round"/></svg><svg style="left:1455.50px;top:93.50px" width="39.0" height="39.0" viewBox="0 0 40 40"><defs><clipPath id="av1475_113"><circle cx="20" cy="20" r="20"/></clipPath><filter id="ab1475_113" x="-10%" y="-10%" width="120%" height="120%"><feGaussianBlur stdDeviation="0.55"/></filter></defs><g clip-path="url(#av1475_113)"><rect width="40" height="40" fill="#E3E6EC"/><g filter="url(#ab1475_113)"><path d="M1,44C2,33 7,29.500 14,28.500L27,28.500C34,29.500 38,33 39,44Z" fill="#141414"/><path d="M14.500,25h12v6.500c-2,3.500-10,3.500-12,0Z" fill="#B98B78"/><ellipse cx="20.700" cy="17.800" rx="10.600" ry="13" fill="#CDA592"/><ellipse cx="9.800" cy="19.500" rx="1.500" ry="2.600" fill="#C39A87"/><ellipse cx="31.600" cy="19.500" rx="1.500" ry="2.600" fill="#C39A87"/><path d="M9.600,18C8,7 13,1.500 20.700,1.500S33.500,7 31.800,18C31.500,11.500 29,8 25,7.200 22,6.600 19,6.600 16.500,7.200 12.500,8 10,11.500 9.600,18Z" fill="#8C8782"/><ellipse cx="16.300" cy="15.300" rx="2.300" ry="0.900" fill="#6B5147"/><ellipse cx="24.700" cy="15.300" rx="2.300" ry="0.900" fill="#6B5147"/><path d="M19.300,16v5.500q1.300,0.800 2.600,0" fill="none" stroke="#B48A78" stroke-width="1.100"/><path d="M16.800,24.300q3.800,1.400 7.600,0" fill="none" stroke="#A86F68" stroke-width="1.300" stroke-linecap="round"/><path d="M12.500,24q1.500,6.500 8.200,7 6.700,-0.500 8.200,-7 -1.500,8.500 -8.200,9 -6.700,-0.500 -8.200,-9Z" fill="#B89380" opacity=".6"/></g></g></svg><div style="left:765.20px;top:152.37px;font-size:16.40px;line-height:18.86px;color:#3a3a3a;white-space:nowrap;transform:scaleX(0.9460);transform-origin:0 50%;">File</div><div style="left:818.80px;top:152.37px;font-size:16.40px;line-height:18.86px;color:#222;white-space:nowrap;font-weight:bold;transform:scaleX(1.0227);transform-origin:0 50%;">Home</div><div style="left:894.00px;top:152.37px;font-size:16.40px;line-height:18.86px;color:#3a3a3a;white-space:nowrap;transform:scaleX(1.0240);transform-origin:0 50%;">Insert</div><div style="left:965.20px;top:152.37px;font-size:16.40px;line-height:18.86px;color:#3a3a3a;white-space:nowrap;transform:scaleX(1.0088);transform-origin:0 50%;">Design</div><div style="left:1045.90px;top:152.37px;font-size:16.40px;line-height:18.86px;color:#3a3a3a;white-space:nowrap;transform:scaleX(0.9689);transform-origin:0 50%;">Review</div><div style="left:1127.30px;top:152.37px;font-size:16.40px;line-height:18.86px;color:#3a3a3a;white-space:nowrap;transform:scaleX(1.0212);transform-origin:0 50%;">View</div><div style="left:1192.00px;top:152.37px;font-size:16.40px;line-height:18.86px;color:#3a3a3a;white-space:nowrap;transform:scaleX(1.0169);transform-origin:0 50%;">Help</div><div style="left:818.50px;top:176.50px;width:47.00px;height:2.60px;background:#4A54A4;border-radius:1.300px;"></div><div style="left:1270.80px;top:148.00px;width:40.50px;height:27.80px;background:#fff;border:1px solid #D1D1D1;border-radius:5px;"></div><svg style="left:1281.00px;top:152.50px;" width="20" height="20" viewBox="0 0 24 24"><path d="M4,4.500h16v11H11.500L7.500,19.500V15.500H4Z" fill="none" stroke="#333" stroke-width="1.4" stroke-linecap="round" stroke-linejoin="round"/></svg><div style="left:1322.00px;top:148.00px;width:60.50px;height:27.80px;background:#fff;border:1px solid #D1D1D1;border-radius:5px;"></div><svg style="left:1331.50px;top:151.00px;" width="21" height="21" viewBox="0 0 24 24"><path d="M4,20l1.300-5L16.500,3.800a1.800,1.800 0 0 1 2.500,0l1.200,1.200a1.800,1.800 0 0 1 0,2.500L9,18.700Z M5.300,15l3.700,3.700 M14.700,5.600l3.700,3.700" fill="none" stroke="#333" stroke-width="1.3" stroke-linecap="round" stroke-linejoin="round"/></svg><svg style="left:1356.00px;top:155.00px;" width="16" height="16" viewBox="0 0 24 24"><path d="M4.5,8.5L12,16l7.5-7.5" fill="none" stroke="#333" stroke-width="1.3" stroke-linecap="round" stroke-linejoin="round"/></svg><div style="left:1392.50px;top:147.50px;width:102.50px;height:28.80px;background:#4A54A4;border-radius:5px;"></div><svg style="left:1401.00px;top:150.00px;" width="24" height="24" viewBox="0 0 24 24"><circle cx="8.500" cy="12" r="3" fill="none" stroke="#fff" stroke-width="1.4" stroke-linecap="round" stroke-linejoin="round"/><path d="M3.500,21v-1a5,5 0 0 1 10,0v1" fill="none" stroke="#fff" stroke-width="1.4" stroke-linecap="round" stroke-linejoin="round"/><circle cx="16.500" cy="6.500" r="2.700" fill="none" stroke="#fff" stroke-width="1.4" stroke-linecap="round" stroke-linejoin="round"/><path d="M12.500,12.500a4.500,4.500 0 0 1 8.500,2" fill="none" stroke="#fff" stroke-width="1.4" stroke-linecap="round" stroke-linejoin="round"/></svg><div style="left:1428.00px;top:154.44px;font-size:13.68px;line-height:15.73px;color:#fff;white-space:nowrap;">Share</div><svg style="left:1468.50px;top:154.50px;" width="17" height="17" viewBox="0 0 24 24"><path d="M4.5,8.5L12,16l7.5-7.5" fill="none" stroke="#fff" stroke-width="1.3" stroke-linecap="round" stroke-linejoin="round"/></svg><svg style="left:766.00px;top:196.20px;" width="29" height="29" viewBox="0 0 24 24"><path d="M7,4.500v6.500h6.500M7,11L11,7.500a5,5 0 0 1 7,7L10.500,21.500" fill="none" stroke="#A6A6A6" stroke-width="1.1" stroke-linecap="round" stroke-linejoin="round"/></svg><svg style="left:805.20px;top:196.20px;" width="29" height="29" viewBox="0 0 24 24"><path d="M17,4.500v6.500h-6.500M17,11L13,7.500a5,5 0 0 0 -7,7L13.500,21.500" fill="none" stroke="#A6A6A6" stroke-width="1.1" stroke-linecap="round" stroke-linejoin="round"/></svg><div style="left:844.50px;top:196.40px;width:1.00px;height:28.60px;background:#C8C8C8;"></div><svg style="left:857.00px;top:197.20px;" width="27" height="27" viewBox="0 0 24 24"><path d="M3.500,13.500l7.500-3.500 5,5.500 -2,5.500 -4,-1 -1.500,-2 -1,1 -2,-2.500 1.500,-1.500Z" fill="#F6DDB8" stroke="#E8B06A" stroke-width="1" stroke-linejoin="round"/><path d="M12,10.500l4.500-4a1.800,1.800 0 0 1 2.500,2.500l-3.800,4.300M11,10l5,5.500" fill="none" stroke="#888" stroke-width="1.1" stroke-linecap="round" stroke-linejoin="round"/></svg><div style="left:894.90px;top:196.40px;width:1.00px;height:28.60px;background:#C8C8C8;"></div><svg style="left:908.90px;top:199.70px;" width="23" height="23" viewBox="0 0 24 24"><path d="M4,4L20,20M20,4L4,20" fill="none" stroke="#F0A8A8" stroke-width="1.0" stroke-linecap="round" stroke-linejoin="round"/></svg><div style="left:945.10px;top:196.40px;width:1.00px;height:28.60px;background:#C8C8C8;"></div><div style="left:958.40px;top:195.70px;font-size:20.00px;line-height:23.00px;color:#9a9a9a;white-space:nowrap;width:25.00px;text-align:center;">A</div><div style="left:958.40px;top:217.80px;width:24.60px;height:5.00px;background:#A0A0A0;"></div><svg style="left:986.60px;top:203.50px;" width="16" height="16" viewBox="0 0 24 24"><path d="M4.5,8.5L12,16l7.5-7.5" fill="none" stroke="#8a8a8a" stroke-width="1.25" stroke-linecap="round" stroke-linejoin="round"/></svg><svg style="left:1013.40px;top:198.00px;" width="26" height="26" viewBox="0 0 24 24"><circle cx="5" cy="12" r="1.6" fill="#9a9a9a"/><circle cx="12" cy="12" r="1.6" fill="#9a9a9a"/><circle cx="19" cy="12" r="1.6" fill="#9a9a9a"/></svg><div style="left:1051.50px;top:196.40px;width:1.00px;height:28.60px;background:#C8C8C8;"></div><svg style="left:1064.30px;top:198.20px;" width="25" height="25" viewBox="0 0 24 24"><path d="M2,4.500H22M6,9H18M2,13.500H22M6,18H18" fill="none" stroke="#A8A8A8" stroke-width="1.1" stroke-linecap="round" stroke-linejoin="round"/></svg><svg style="left:1093.20px;top:203.50px;" width="16" height="16" viewBox="0 0 24 24"><path d="M4.5,8.5L12,16l7.5-7.5" fill="none" stroke="#8a8a8a" stroke-width="1.25" stroke-linecap="round" stroke-linejoin="round"/></svg><div style="left:1120.00px;top:200.20px;font-size:20.00px;line-height:23.00px;color:#A6A6A6;white-space:nowrap;width:18.00px;text-align:center;">A</div><svg style="left:1136.50px;top:198.50px;" width="10" height="10" viewBox="0 0 24 24"><path d="M4,20V5H19M4,5L20,21" fill="none" stroke="#A9C7EE" stroke-width="2" stroke-linecap="round" stroke-linejoin="round"/></svg><div style="left:1158.20px;top:196.40px;width:1.00px;height:28.60px;background:#C8C8C8;"></div><div style="left:1173.50px;top:202.50px;width:20.50px;height:16.50px;border:1.300px solid #3a3a3a;"></div><div style="left:1173.50px;top:202.94px;font-size:13.50px;line-height:15.52px;color:#4E86D8;white-space:nowrap;width:20.50px;text-align:center;">A</div><div style="left:1172.00px;top:201.00px;width:3.00px;height:3.00px;background:#fff;border:0.800px solid #4E86D8;"></div><div style="left:1192.50px;top:201.00px;width:3.00px;height:3.00px;background:#fff;border:0.800px solid #4E86D8;"></div><div style="left:1172.00px;top:217.50px;width:3.00px;height:3.00px;background:#fff;border:0.800px solid #4E86D8;"></div><div style="left:1192.50px;top:217.50px;width:3.00px;height:3.00px;background:#fff;border:0.800px solid #4E86D8;"></div><div style="left:1212.00px;top:202.50px;width:22.20px;height:16.50px;background:#fff;border:1.300px solid #2b2b2b;"></div><svg style="left:1238.70px;top:203.50px;" width="16" height="16" viewBox="0 0 24 24"><path d="M4.5,8.5L12,16l7.5-7.5" fill="none" stroke="#2b2b2b" stroke-width="1.25" stroke-linecap="round" stroke-linejoin="round"/></svg><svg style="left:1267.50px;top:198.70px;" width="24" height="24" viewBox="0 0 24 24"><path d="M2.500,4.500H12.500V18H22" fill="none" stroke="#2b2b2b" stroke-width="1.3" stroke-linecap="round" stroke-linejoin="round"/><path d="M18.500,14.500L22,18l-3.500,3.500" fill="none" stroke="#2b2b2b" stroke-width="1.3" stroke-linecap="round" stroke-linejoin="round"/></svg><div style="left:1304.30px;top:196.40px;width:1.00px;height:28.60px;background:#C8C8C8;"></div><svg style="left:1319.50px;top:197.50px;" width="20" height="20" viewBox="0 0 24 24"><path d="M3.500,13L11,6l7.500,8 -6.500,6Z" fill="none" stroke="#A8A8A8" stroke-width="1.1" stroke-linecap="round" stroke-linejoin="round"/><path d="M9.500,9V3.500a1.800,1.800 0 0 1 3.600,0V8" fill="none" stroke="#A8A8A8" stroke-width="1.1" stroke-linecap="round" stroke-linejoin="round"/><path d="M18,10c2,-1 3.500,1.500 2.500,4.500" fill="none" stroke="#7FA8E0" stroke-width="1.4" stroke-linecap="round" stroke-linejoin="round"/></svg><div style="left:1317.50px;top:217.20px;width:24.30px;height:5.20px;background:#B9BDE0;"></div><svg style="left:1345.40px;top:203.50px;" width="16" height="16" viewBox="0 0 24 24"><path d="M4.5,8.5L12,16l7.5-7.5" fill="none" stroke="#9a9a9a" stroke-width="1.25" stroke-linecap="round" stroke-linejoin="round"/></svg><svg style="left:1375.50px;top:197.00px;" width="21" height="21" viewBox="0 0 24 24"><path d="M20.500,2.500C16,7 12.500,11.500 10.500,15l-2-1.500C11,10 15.500,5.500 20.500,2.500Z" fill="none" stroke="#B0B0B0" stroke-width="1" stroke-linecap="round" stroke-linejoin="round"/><path d="M9.500,14.500c-2.500,0-3.500,1.500-4,3.500-0.300,1-1.300,1.500-2.500,1.500 3,2 8,1.500 8.500-3Z" fill="#A9C7EE"/></svg><div style="left:1373.50px;top:217.20px;width:24.50px;height:5.20px;background:#B9BDE0;"></div><svg style="left:1401.40px;top:203.50px;" width="16" height="16" viewBox="0 0 24 24"><path d="M4.5,8.5L12,16l7.5-7.5" fill="none" stroke="#9a9a9a" stroke-width="1.25" stroke-linecap="round" stroke-linejoin="round"/></svg><div style="left:1427.70px;top:196.40px;width:1.00px;height:28.60px;background:#C8C8C8;"></div><div style="left:1463.00px;top:207.00px;width:4.00px;height:6.00px;border:1px solid #B0B0B0;"></div><svg style="left:1469.00px;top:203.50px;" width="16" height="16" viewBox="0 0 24 24"><path d="M4.5,8.5L12,16l7.5-7.5" fill="none" stroke="#9a9a9a" stroke-width="1.25" stroke-linecap="round" stroke-linejoin="round"/></svg><div style="left:1431.60px;top:186.00px;width:28.60px;height:48.50px;background:#fff;border:1px solid #D0D0D0;"></div><svg style="left:1436.30px;top:203.00px;" width="17" height="17" viewBox="0 0 24 24"><path d="M8.5,4.5L16,12l-7.5,7.5" fill="none" stroke="#2b2b2b" stroke-width="1.4" stroke-linecap="round" stroke-linejoin="round"/></svg><svg style="left:756.80px;top:250.80px;" width="22" height="22" viewBox="0 0 24 24"><path d="M8.5,4.5L16,12l-7.5,7.5" fill="none" stroke="#3B459E" stroke-width="1.5" stroke-linecap="round" stroke-linejoin="round"/></svg><svg style="left:756.80px;top:304.30px;" width="22" height="22" viewBox="0 0 24 24"><circle cx="13.500" cy="10.500" r="5.800" fill="none" stroke="#3B459E" stroke-width="1.6" stroke-linecap="round" stroke-linejoin="round"/><path d="M9.300,14.800L4,20" fill="none" stroke="#3B459E" stroke-width="2" stroke-linecap="round" stroke-linejoin="round"/></svg><div style="left:743.00px;top:343.00px;width:53.70px;height:1.00px;background:#D5D5D3;"></div><svg style="left:752.70px;top:355.00px;" width="32" height="32" viewBox="0 0 24 24"><rect x="7" y="2.500" width="14.500" height="11" rx="0.500" fill="none" stroke="#3B459E" stroke-width="0.9" stroke-linecap="round" stroke-linejoin="round"/><path d="M7,4.300H21.500" fill="none" stroke="#3B459E" stroke-width="0.7" stroke-linecap="round" stroke-linejoin="round"/><circle cx="11.500" cy="10" r="3.300" fill="#EDEDEB" stroke="#3B459E" stroke-width="0.900"/><rect x="11.500" y="10" width="6" height="5" fill="#EDEDEB" stroke="#3B459E" stroke-width="0.900"/><path d="M2.500,22.500V11l9.500,11.500Z M5,19.500v-2.500l2.200,2.500Z" fill="none" stroke="#3B459E" stroke-width="0.9" stroke-linecap="round" stroke-linejoin="round"/><rect x="11" y="17.500" width="11.500" height="3" fill="none" stroke="#3B459E" stroke-width="0.8" stroke-linecap="round" stroke-linejoin="round"/><path d="M13,17.500v1.500M15,17.500v1.500M17,17.500v1.500M19,17.500v1.500M21,17.500v1.500" fill="none" stroke="#3B459E" stroke-width="0.6" stroke-linecap="round" stroke-linejoin="round"/><path d="M22.500,2.500l1.500,1.500-7,7-2.200,0.700 0.700-2.200Z" fill="#EDEDEB" stroke="#3B459E" stroke-width="0.900" stroke-linejoin="round"/></svg><div style="left:746.70px;top:402.80px;width:43.60px;height:44.00px;background:#C9CBDC;border-radius:6px;"></div><svg style="left:753.60px;top:410.00px;" width="30" height="30" viewBox="0 0 24 24"><circle cx="12" cy="12" r="9.700" fill="none" stroke="#3B459E" stroke-width="1" stroke-linecap="round" stroke-linejoin="round"/><path d="M12,7.500v9M7.500,12h9" fill="none" stroke="#3B459E" stroke-width="1.1" stroke-linecap="round" stroke-linejoin="round"/></svg><svg style="left:1498.500px;top:238px" width="6" height="6" viewBox="0 0 6 6"><path d="M3,1L5.500,5H0.500Z" fill="#777"/></svg><svg style="left:1498.500px;top:783.500px" width="6" height="6" viewBox="0 0 6 6"><path d="M3,5L5.500,1H0.500Z" fill="#777"/></svg><div style="left:1499.70px;top:407.00px;width:3.30px;height:207.00px;background:#8a8a8a;border-radius:1.700px;"></div><svg style="left:799px;top:792.500px" width="6" height="6" viewBox="0 0 6 6"><path d="M1,3L5,0.500V5.500Z" fill="#777"/></svg><svg style="left:1489.500px;top:792.500px" width="6" height="6" viewBox="0 0 6 6"><path d="M5,3L1,0.500V5.500Z" fill="#777"/></svg><div style="left:1036.00px;top:793.80px;width:250.60px;height:3.30px;background:#8a8a8a;border-radius:1.700px;"></div><svg style="left:802.30px;top:803.70px;" width="22" height="22" viewBox="0 0 24 24"><path d="M1.500,5.500H22.500M1.500,12H22.500M1.500,18.500H22.500" fill="none" stroke="#C4C4C4" stroke-width="1.1" stroke-linecap="round" stroke-linejoin="round"/></svg><svg style="left:831.60px;top:801.70px;" width="26" height="26" viewBox="0 0 24 24"><path d="M15.5,4.5L8,12l7.5,7.5" fill="none" stroke="#BDBDBD" stroke-width="1.0" stroke-linecap="round" stroke-linejoin="round"/></svg><svg style="left:868.00px;top:801.70px;" width="26" height="26" viewBox="0 0 24 24"><path d="M8.5,4.5L16,12l-7.5,7.5" fill="none" stroke="#BDBDBD" stroke-width="1.0" stroke-linecap="round" stroke-linejoin="round"/></svg><div style="left:897.30px;top:804.00px;width:1.00px;height:19.00px;background:#9a9a9a;"></div><div style="left:915.80px;top:805.92px;font-size:14.75px;line-height:16.96px;color:#3B4A9A;white-space:nowrap;font-weight:bold;">Configuration managem...</div><div style="left:1117.60px;top:804.00px;width:1.00px;height:19.00px;background:#9a9a9a;"></div><svg style="left:1123.90px;top:803.70px;" width="22" height="22" viewBox="0 0 24 24"><circle cx="12" cy="12" r="10" fill="none" stroke="#3B459E" stroke-width="1.1" stroke-linecap="round" stroke-linejoin="round"/><path d="M12,7v10M7,12h10" fill="none" stroke="#3B459E" stroke-width="1.6" stroke-linecap="round" stroke-linejoin="round"/></svg><div style="left:914.00px;top:847.10px;width:13.50px;height:1.40px;background:#222;"></div><div style="left:956.50px;top:847.00px;width:137.00px;height:1.60px;background:#444;"></div><div style="left:958.00px;top:838.80px;width:17.00px;height:17.00px;background:#fff;border-radius:50%;box-shadow:0 0 1.500px rgba(0,0,0,.4);"></div><div style="left:960.50px;top:841.30px;width:12.00px;height:12.00px;background:#4552A8;border-radius:50%;"></div><svg style="left:1120.60px;top:841.00px;" width="14" height="14" viewBox="0 0 24 24"><path d="M12,3V21M3,12H21" fill="none" stroke="#222" stroke-width="2.0" stroke-linecap="round" stroke-linejoin="round"/></svg><div style="left:1173.40px;top:840.93px;font-size:14.04px;line-height:16.15px;color:#555;white-space:nowrap;">41%</div><svg style="left:1239.30px;top:840.80px;" width="15" height="15" viewBox="0 0 24 24"><rect x="8" y="6" width="8" height="12" rx="2.500" fill="none" stroke="#333" stroke-width="1.4" stroke-linecap="round" stroke-linejoin="round"/><path d="M12,1.500L9.500,4h5ZM12,22.500L9.500,20h5ZM1.500,12L4,9.500v5ZM22.500,12L20,9.500v5Z" fill="#333"/><path d="M5,12H8M16,12h3" fill="none" stroke="#333" stroke-width="1.2" stroke-linecap="round" stroke-linejoin="round"/></svg><div style="left:1292.50px;top:840.66px;font-size:14.50px;line-height:16.68px;color:#555;white-space:nowrap;">Give Feedback to Microsoft</div></div></div><div style="left:744.00px;top:11.00px;width:49.50px;height:19.50px;border:1.300px solid #222;border-radius:10px;"></div><svg style="left:746.10px;top:12.50px" width="16.6" height="16.6" viewBox="0 0 40 40"><defs><clipPath id="av754_20"><circle cx="20" cy="20" r="20"/></clipPath><filter id="ab754_20" x="-10%" y="-10%" width="120%" height="120%"><feGaussianBlur stdDeviation="0.55"/></filter></defs><g clip-path="url(#av754_20)"><rect width="40" height="40" fill="#E3E6EC"/><g filter="url(#ab754_20)"><path d="M1,44C2,33 7,29.500 14,28.500L27,28.500C34,29.500 38,33 39,44Z" fill="#141414"/><path d="M14.500,25h12v6.500c-2,3.500-10,3.500-12,0Z" fill="#B98B78"/><ellipse cx="20.700" cy="17.800" rx="10.600" ry="13" fill="#CDA592"/><ellipse cx="9.800" cy="19.500" rx="1.500" ry="2.600" fill="#C39A87"/><ellipse cx="31.600" cy="19.500" rx="1.500" ry="2.600" fill="#C39A87"/><path d="M9.600,18C8,7 13,1.500 20.700,1.500S33.500,7 31.800,18C31.500,11.500 29,8 25,7.200 22,6.600 19,6.600 16.500,7.200 12.500,8 10,11.500 9.600,18Z" fill="#8C8782"/><ellipse cx="16.300" cy="15.300" rx="2.300" ry="0.900" fill="#6B5147"/><ellipse cx="24.700" cy="15.300" rx="2.300" ry="0.900" fill="#6B5147"/><path d="M19.300,16v5.500q1.300,0.800 2.600,0" fill="none" stroke="#B48A78" stroke-width="1.100"/><path d="M16.800,24.300q3.800,1.400 7.600,0" fill="none" stroke="#A86F68" stroke-width="1.300" stroke-linecap="round"/><path d="M12.500,24q1.500,6.500 8.200,7 6.700,-0.500 8.200,-7 -1.500,8.500 -8.200,9 -6.700,-0.500 -8.200,-9Z" fill="#B89380" opacity=".6"/></g></g></svg><div style="left:767.00px;top:15.02px;font-size:9.70px;line-height:11.15px;color:#222;white-space:nowrap;transform:scaleX(0.8461);transform-origin:0 50%;">Work</div><svg style="left:803.50px;top:13.10px;" width="15" height="15" viewBox="0 0 24 24"><rect x="9" y="8" width="11" height="11.5" rx="2.5" fill="none" stroke="#333" stroke-width="1.5" stroke-linecap="round" stroke-linejoin="round"/><path d="M7,17.5l-2.8-8.5a2.3,2.3 0 0 1 1.5,-2.9L13,3.7a2.3,2.3 0 0 1 2.8,1.2L16.3,6M9,15l-1.5-4a2,2 0 0 1 1.2,-2.5" fill="none" stroke="#333" stroke-width="1.4" stroke-linecap="round" stroke-linejoin="round"/></svg><svg style="left:833.50px;top:13.60px;" width="14" height="14" viewBox="0 0 24 24"><rect x="3.5" y="4" width="17" height="16" rx="3" fill="none" stroke="#222" stroke-width="1.8" stroke-linecap="round" stroke-linejoin="round"/><path d="M3.5,8.5H20.5M8.5,8.5V20" fill="none" stroke="#222" stroke-width="1.8" stroke-linecap="round" stroke-linejoin="round"/><path d="M4,5.5a2,2 0 0 1 2,-1.5h12a2,2 0 0 1 2,1.5V8.5H4Z" fill="#222"/></svg><div style="left:859.50px;top:13.50px;width:1.00px;height:14.00px;background:#767676;"></div><svg style="left:866.50px;top:14.10px;" width="13" height="13" viewBox="0 0 24 24"><rect x="3.500" y="4" width="17" height="16" rx="3.500" fill="none" stroke="#222" stroke-width="1.7" stroke-linecap="round" stroke-linejoin="round"/><path d="M3.500,9H20.500" fill="none" stroke="#222" stroke-width="1.7" stroke-linecap="round" stroke-linejoin="round"/><circle cx="8" cy="14" r="1.100" fill="#222"/><circle cx="12" cy="14" r="1.100" fill="#222"/><circle cx="16" cy="14" r="1.100" fill="#222"/></svg><div style="left:886.00px;top:15.02px;font-size:9.70px;line-height:11.15px;color:#2b2b2b;white-space:nowrap;transform:scaleX(0.8712);transform-origin:0 50%;">New tab</div><svg style="left:976.60px;top:16.70px;" width="7.8" height="7.8" viewBox="0 0 24 24"><path d="M4,4L20,20M20,4L4,20" fill="none" stroke="#222" stroke-width="3.4" stroke-linecap="round" stroke-linejoin="round"/></svg><div style="left:990.00px;top:13.50px;width:1.00px;height:14.00px;background:#767676;"></div><svg style="left:997.00px;top:14.10px;" width="13" height="13" viewBox="0 0 24 24"><circle cx="13" cy="8" r="6.5" fill="#1A7F86"/><circle cx="17" cy="14.5" r="5.5" fill="#2AA5AC"/><circle cx="12" cy="19" r="4" fill="#39C2C9"/><rect x="1.5" y="6.5" width="11" height="11" rx="1.5" fill="#0F6A70"/><text x="7" y="15.5" font-size="9" font-weight="bold" fill="#fff" text-anchor="middle" font-family="Liberation Sans">S</text></svg><div style="left:1016.80px;top:15.02px;font-size:9.70px;line-height:11.15px;color:#2b2b2b;white-space:nowrap;transform:scaleX(0.8303);transform-origin:0 50%;-webkit-mask-image:linear-gradient(90deg,#000 82%,transparent 100%);">Lucifer - Transformed F</div><svg style="left:1107.90px;top:16.70px;" width="7.8" height="7.8" viewBox="0 0 24 24"><path d="M4,4L20,20M20,4L4,20" fill="none" stroke="#222" stroke-width="3.4" stroke-linecap="round" stroke-linejoin="round"/></svg><svg style="left:1113.500px;top:9px" width="147.500" height="24.200" viewBox="0 0 147.500 24.200"><path d="M0,24.200 C6,24.200 8.300,22 8.300,17 V6 a6,6 0 0 1 6,-6 H133.500 a6,6 0 0 1 6,6 V17 C139.500,22 142,24.200 147.500,24.200 Z" fill="#F7F7F7"/></svg><svg style="left:1127.64px;top:13.98px" width="12.73" height="13.36" viewBox="0 0 20 21"><path d="M11,0.700L17.500,7.300 11,13.500 4.500,7.300Z" fill="#62A4F2"/><rect x="12" y="5.900" width="7.900" height="9.400" rx="1" fill="#4E83DC"/><circle cx="11" cy="16.100" r="4.700" fill="#27459C"/><rect x="0.100" y="4.350" width="12.500" height="12.500" rx="1.100" fill="#3D5DC3"/><path d="M3.300,7.300L6.350,14 9.400,7.300" fill="none" stroke="#fff" stroke-width="1.500" stroke-linejoin="miter"/></svg><div style="left:1147.50px;top:15.02px;font-size:9.70px;line-height:11.15px;color:#2b2b2b;white-space:nowrap;transform:scaleX(0.8905);transform-origin:0 50%;-webkit-mask-image:linear-gradient(90deg,#000 84%,transparent 100%);">Configuration manage</div><svg style="left:1238.60px;top:16.70px;" width="7.8" height="7.8" viewBox="0 0 24 24"><path d="M4,4L20,20M20,4L4,20" fill="none" stroke="#222" stroke-width="3.4" stroke-linecap="round" stroke-linejoin="round"/></svg><div style="left:1259.50px;top:14.30px;width:12.50px;height:12.50px;background:#fff;border-radius:3px;"></div><svg style="left:1261.500px;top:18px" width="8.500" height="5.500" viewBox="0 0 9 6"><path d="M0.800,0.800l1.700,4.200 2-4.200" fill="none" stroke="#C2185B" stroke-width="1.300" stroke-linejoin="round" stroke-linecap="round"/><path d="M4.500,0.800l2,4.200 1.700-4.200" fill="none" stroke="#7B2FBE" stroke-width="1.300" stroke-linejoin="round" stroke-linecap="round"/></svg><div style="left:1278.80px;top:15.02px;font-size:9.70px;line-height:11.15px;color:#2b2b2b;white-space:nowrap;transform:scaleX(0.8518);transform-origin:0 50%;-webkit-mask-image:linear-gradient(90deg,#000 84%,transparent 100%);">Your Microsoft 365 sub</div><svg style="left:1369.10px;top:16.70px;" width="7.8" height="7.8" viewBox="0 0 24 24"><path d="M4,4L20,20M20,4L4,20" fill="none" stroke="#222" stroke-width="3.4" stroke-linecap="round" stroke-linejoin="round"/></svg><div style="left:1383.50px;top:13.50px;width:1.00px;height:14.00px;background:#767676;"></div><svg style="left:1393.30px;top:14.60px;" width="12" height="12" viewBox="0 0 24 24"><path d="M12,3V21M3,12H21" fill="none" stroke="#222" stroke-width="1.9" stroke-linecap="round" stroke-linejoin="round"/></svg><div style="left:1450.00px;top:15.80px;width:9.00px;height:1.30px;background:#222;"></div><div style="left:1483.20px;top:12.30px;width:8.00px;height:8.00px;border:1.300px solid #222;border-radius:1.500px;"></div><svg style="left:1514.70px;top:11.90px;" width="9.0" height="9.0" viewBox="0 0 24 24"><path d="M4,4L20,20M20,4L4,20" fill="none" stroke="#1a1a1a" stroke-width="3.2" stroke-linecap="round" stroke-linejoin="round"/></svg><svg style="left:750.50px;top:38.30px;" width="15" height="15" viewBox="0 0 24 24"><path d="M20,12H4.5M11,5L4,12l7,7" fill="none" stroke="#CFCFCF" stroke-width="1.7" stroke-linecap="round" stroke-linejoin="round"/></svg><svg style="left:781.65px;top:37.75px;" width="15.5" height="15.5" viewBox="0 0 24 24"><path d="M20,12a8,8 0 1 1 -2.6,-5.9" fill="none" stroke="#2b2b2b" stroke-width="1.7" stroke-linecap="round" stroke-linejoin="round"/><path d="M19.6,2.6v4.4h-4.4" fill="none" stroke="#2b2b2b" stroke-width="1.7" stroke-linecap="round" stroke-linejoin="round"/></svg><svg style="left:813.00px;top:38.80px;" width="14" height="14" viewBox="0 0 24 24"><circle cx="10" cy="10" r="6.2" fill="none" stroke="#2b2b2b" stroke-width="1.9" stroke-linecap="round" stroke-linejoin="round"/><path d="M14.8,14.8L21,21" fill="none" stroke="#2b2b2b" stroke-width="1.9" stroke-linecap="round" stroke-linejoin="round"/></svg><div style="left:840.00px;top:36.00px;width:442.00px;height:21.00px;background:#fff;border-radius:10.500px;"></div><svg style="left:851.00px;top:39.30px;" width="13" height="13" viewBox="0 0 24 24"><rect x="5" y="10" width="14" height="10.5" rx="2" fill="none" stroke="#444" stroke-width="1.6" stroke-linecap="round" stroke-linejoin="round"/><path d="M8.5,10V7.5a3.5,3.5 0 0 1 7,0V10" fill="none" stroke="#444" stroke-width="1.6" stroke-linecap="round" stroke-linejoin="round"/><circle cx="12" cy="15.2" r="1.1" fill="#444"/></svg><div style="left:874.30px;top:39.47px;font-size:11.00px;line-height:12.65px;color:#000;white-space:nowrap;transform:scaleX(0.8949);transform-origin:0 50%;"><span style="color:#6b6b6b">https://</span><span style="color:#111">bvisualnet.sharepoint.com</span><span style="color:#6b6b6b">/:u:/r/sites/Lucifer/_layouts/15/Doc.asp...</span></div><svg style="left:1202.75px;top:39.55px;" width="12.5" height="12.5" viewBox="0 0 24 24"><circle cx="10" cy="10" r="6.5" fill="none" stroke="#666" stroke-width="1.6" stroke-linecap="round" stroke-linejoin="round"/><path d="M15,15L21,21M7,10h6M10,7v6" fill="none" stroke="#666" stroke-width="1.6" stroke-linecap="round" stroke-linejoin="round"/></svg><svg style="left:1230.25px;top:39.05px;" width="13.5" height="13.5" viewBox="0 0 24 24"><path d="M3.5,19L9.5,4.5h1L16.5,19M5.8,14h8.4" fill="none" stroke="#666" stroke-width="1.5" stroke-linecap="round" stroke-linejoin="round"/><path d="M17.5,5.5a5,5 0 0 1 2,4M19.8,3.2a8,8 0 0 1 2.7,6.2" fill="none" stroke="#666" stroke-width="1.3" stroke-linecap="round" stroke-linejoin="round"/></svg><svg style="left:1257.50px;top:38.30px;" width="15" height="15" viewBox="0 0 24 24"><path d="M12,3.5l2.6,5.4 5.9,0.8-4.3,4.1 1,5.9L12,16.9 6.8,19.7l1-5.9L3.5,9.7l5.9-0.8Z" fill="none" stroke="#666" stroke-width="1.5" stroke-linecap="round" stroke-linejoin="round"/></svg><svg style="left:1294.50px;top:37.80px;" width="16" height="16" viewBox="0 0 24 24"><path d="M10,4a6.5,6.5 0 0 0 -5.5,4.2L4,12l2,1.2 0,2.8 -1.6,1.8a7,7 0 0 0 5.6,3.2h5.5l1.3,-2.3 2.2,0.3v-3.5a2.3,2.3 0 1 1 0,-4.6V7l-2.3,0.4 -1.5,-2.9Z" fill="none" stroke="#2b2b2b" stroke-width="1.6" stroke-linecap="round" stroke-linejoin="round"/></svg><div style="left:1319.50px;top:39.50px;width:1.00px;height:12.00px;background:#CFCFCF;"></div><svg style="left:1328.00px;top:37.80px;" width="16" height="16" viewBox="0 0 24 24"><path d="M11,5H5.5a2,2 0 0 0 -2,2v10a2,2 0 0 0 2,2H11M13,5h5.5a2,2 0 0 1 2,2v10a2,2 0 0 1 -2,2H13M12,2.5v19" fill="none" stroke="#2b2b2b" stroke-width="1.6" stroke-linecap="round" stroke-linejoin="round"/></svg><svg style="left:1359.50px;top:37.80px;" width="16" height="16" viewBox="0 0 24 24"><path d="M9.5,4l2.2,4.6 5,0.7-3.6,3.5 0.9,5L9.5,15.5 5,17.8l0.9-5L2.3,9.3l5-0.7Z" fill="none" stroke="#2b2b2b" stroke-width="1.5" stroke-linecap="round" stroke-linejoin="round"/><path d="M15.5,13.5h6M16.5,17h5M14.5,20.5h7" fill="none" stroke="#2b2b2b" stroke-width="1.5" stroke-linecap="round" stroke-linejoin="round"/></svg><svg style="left:1390.00px;top:37.80px;" width="16" height="16" viewBox="0 0 24 24"><rect x="8" y="8" width="12.5" height="12.5" rx="2.5" fill="none" stroke="#2b2b2b" stroke-width="1.5" stroke-linecap="round" stroke-linejoin="round"/><path d="M16.5,8V6a2.3,2.3 0 0 0 -2.3,-2.3H6A2.3,2.3 0 0 0 3.7,6v8.2A2.3,2.3 0 0 0 6,16.5h2M14.2,11v6.5M11,14.2h6.5" fill="none" stroke="#2b2b2b" stroke-width="1.5" stroke-linecap="round" stroke-linejoin="round"/></svg><svg style="left:1421.50px;top:37.80px;" width="16" height="16" viewBox="0 0 24 24"><path d="M12,20C5,15.5 3,12 3,8.8A4.4,4.4 0 0 1 12,7a4.4,4.4 0 0 1 9,1.8c0,1.2-0.3,2.3-0.9,3.4" fill="none" stroke="#2b2b2b" stroke-width="1.5" stroke-linecap="round" stroke-linejoin="round"/><path d="M5,12.5h3l1.5-3 2.5,6 1.5-3h2" fill="none" stroke="#2b2b2b" stroke-width="1.4" stroke-linecap="round" stroke-linejoin="round"/><circle cx="17.8" cy="17.3" r="4.6" fill="#2E8B3D"/><path d="M15.6,17.4l1.6,1.6 2.8-3" fill="none" stroke="#fff" stroke-width="1.3" stroke-linecap="round" stroke-linejoin="round"/></svg><svg style="left:1452.00px;top:37.80px;" width="16" height="16" viewBox="0 0 24 24"><circle cx="9" cy="9.5" r="3" fill="none" stroke="#2b2b2b" stroke-width="1.5" stroke-linecap="round" stroke-linejoin="round"/><path d="M3.5,20v-1a4.5,4.5 0 0 1 4.5,-4.5h2a4.5,4.5 0 0 1 4.5,4.5v1Z" fill="none" stroke="#2b2b2b" stroke-width="1.5" stroke-linecap="round" stroke-linejoin="round"/><rect x="13.5" y="3" width="8" height="6" rx="2" fill="none" stroke="#2b2b2b" stroke-width="1.5" stroke-linecap="round" stroke-linejoin="round"/><path d="M15.5,9v2l2-2" fill="none" stroke="#2b2b2b" stroke-width="1.3" stroke-linecap="round" stroke-linejoin="round"/></svg><svg style="left:1483.00px;top:38.80px;" width="14" height="14" viewBox="0 0 24 24"><circle cx="5" cy="12" r="1.6" fill="#2b2b2b"/><circle cx="12" cy="12" r="1.6" fill="#2b2b2b"/><circle cx="19" cy="12" r="1.6" fill="#2b2b2b"/></svg><svg style="left:1510.50px;top:36.30px;" width="19" height="19" viewBox="0 0 24 24"><defs><linearGradient id="cpa" x1="0" y1="0" x2="0" y2="1"><stop offset="0" stop-color="#3BA5E8"/><stop offset="1" stop-color="#6FD68C"/></linearGradient><linearGradient id="cpb" x1="0" y1="0" x2="1" y2="1"><stop offset="0" stop-color="#3C6BDD"/><stop offset="1" stop-color="#57A8F0"/></linearGradient></defs><path d="M7,3.5h7.5c1.4,0 2.3,0.9 2,2.2L14.6,14.5c-0.3,1.3-1.4,2-2.6,2H4.3c-1.5,0-2.2-1-1.9-2.3L4.4,5.6C4.7,4.3 5.7,3.5 7,3.5Z" fill="url(#cpa)"/><path d="M11.5,7.5h8c1.5,0 2.3,1 2,2.3l-2,8.6c-0.3,1.3-1.4,2.1-2.7,2.1H9.5c-1.4,0-2.3-0.9-2-2.2L9.4,9.6C9.7,8.3 10.4,7.5 11.5,7.5Z" fill="url(#cpb)"/><path d="M12.8,6.2L10.4,17.5" stroke="#fff" stroke-width="1.5" stroke-linecap="round"/></svg><svg style="left:746.50px;top:64.10px;" width="13" height="13" viewBox="0 0 24 24"><circle cx="13" cy="8" r="6.5" fill="#1A7F86"/><circle cx="17" cy="14.5" r="5.5" fill="#2AA5AC"/><circle cx="12" cy="19" r="4" fill="#39C2C9"/><rect x="1.5" y="6.5" width="11" height="11" rx="1.5" fill="#0F6A70"/><text x="7" y="15.5" font-size="9" font-weight="bold" fill="#fff" text-anchor="middle" font-family="Liberation Sans">S</text></svg><div style="left:762.80px;top:65.02px;font-size:9.70px;line-height:11.15px;color:#2b2b2b;white-space:nowrap;transform:scaleX(0.8362);transform-origin:0 50%;">Visio Online Exampl...</div><svg style="left:854.50px;top:64.60px;" width="12" height="12" viewBox="0 0 24 24"><circle cx="12" cy="12" r="11" fill="#1877F2"/><path d="M16.2,15.3l0.5-3.3h-3.2V9.9c0-0.9 0.4-1.8 1.9-1.8h1.4V5.3s-1.3-0.2-2.5-0.2c-2.6,0-4.3,1.6-4.3,4.4V12H7.1v3.3h2.9V23h3.5V15.3Z" fill="#fff"/></svg><div style="left:870.50px;top:65.02px;font-size:9.70px;line-height:11.15px;color:#2b2b2b;white-space:nowrap;transform:scaleX(0.8764);transform-origin:0 50%;">bVisual ltd - Home</div><svg style="left:951.00px;top:64.60px;" width="12" height="12" viewBox="0 0 24 24"><rect x="1" y="1" width="22" height="22" fill="#fff"/><circle cx="8" cy="6.5" r="4" fill="#1B3F94"/><path d="M8,9l9,-3 1,14H9Z" fill="#3B6FD4"/><path d="M13,10h6v11h-6Z" fill="#5B8FE8"/></svg><div style="left:966.80px;top:65.02px;font-size:9.70px;line-height:11.15px;color:#2b2b2b;white-space:nowrap;transform:scaleX(0.8681);transform-origin:0 50%;">bVisual ltd</div><svg style="left:1016.50px;top:64.10px;" width="13" height="13" viewBox="0 0 24 24"><path d="M6,3.5h8l4.5,4.5V20.5H6Z M14,3.5V8h4.5" fill="none" stroke="#222" stroke-width="1.6" stroke-linecap="round" stroke-linejoin="round"/></svg><div style="left:1033.00px;top:65.02px;font-size:9.70px;line-height:11.15px;color:#2b2b2b;white-space:nowrap;transform:scaleX(0.8668);transform-origin:0 50%;">bVisual - for people...</div><svg style="left:1124.00px;top:64.10px;" width="13" height="13" viewBox="0 0 24 24"><path d="M6,3.5h8l4.5,4.5V20.5H6Z M14,3.5V8h4.5" fill="none" stroke="#222" stroke-width="1.6" stroke-linecap="round" stroke-linejoin="round"/></svg><div style="left:1140.50px;top:65.02px;font-size:9.70px;line-height:11.15px;color:#2b2b2b;white-space:nowrap;transform:scaleX(0.8450);transform-origin:0 50%;">Analytics</div><svg style="left:1183.50px;top:64.10px;" width="13" height="13" viewBox="0 0 24 24"><path d="M6,3.5h8l4.5,4.5V20.5H6Z M14,3.5V8h4.5" fill="none" stroke="#222" stroke-width="1.6" stroke-linecap="round" stroke-linejoin="round"/></svg><div style="left:1200.00px;top:65.02px;font-size:9.70px;line-height:11.15px;color:#2b2b2b;white-space:nowrap;transform:scaleX(0.8400);transform-origin:0 50%;">LinkedIn Campaign...</div><svg style="left:1392.30px;top:65.10px;" width="11" height="11" viewBox="0 0 24 24"><path d="M8.5,4.5L16,12l-7.5,7.5" fill="none" stroke="#333" stroke-width="2" stroke-linecap="round" stroke-linejoin="round"/></svg><div style="left:1413.00px;top:64.00px;width:1.00px;height:12.00px;background:#DADADA;"></div><svg style="left:1422.00px;top:63.60px;" width="14" height="14" viewBox="0 0 24 24"><path d="M2.5,6.5a2,2 0 0 1 2,-2h4.2l2.3,2.5H19.5a2,2 0 0 1 2,2V18a2,2 0 0 1 -2,2h-15a2,2 0 0 1 -2,-2Z" fill="#F5CF55" stroke="#D9A521" stroke-width="1.2"/></svg><div style="left:1439.50px;top:65.02px;font-size:9.70px;line-height:11.15px;color:#2b2b2b;white-space:nowrap;transform:scaleX(0.8646);transform-origin:0 50%;">Other favorites</div><svg style="left:1513.00px;top:67.50px;" width="14" height="14" viewBox="0 0 24 24"><circle cx="10" cy="10" r="6" fill="none" stroke="#555" stroke-width="2" stroke-linecap="round" stroke-linejoin="round"/><path d="M14.500,14.500L20.500,20.500" fill="none" stroke="#7B4FD0" stroke-width="2.6" stroke-linecap="round" stroke-linejoin="round"/></svg><svg style="left:1513.00px;top:96.00px;" width="14" height="14" viewBox="0 0 24 24"><path d="M3,13.500L12.500,4H20.500v8L11,21.500Z" fill="#4F86E8" transform="rotate(8 12 12)"/><circle cx="16.800" cy="7.800" r="1.500" fill="#fff"/></svg><svg style="left:1513.00px;top:124.50px;" width="14" height="14" viewBox="0 0 24 24"><rect x="3" y="8.500" width="18" height="11.500" rx="1.500" fill="#D4562B"/><path d="M8.500,8.500V6a1.500,1.500 0 0 1 1.500,-1.500h4a1.500,1.500 0 0 1 1.500,1.500V8.500" fill="none" stroke="#B5411D" stroke-width="2"/><rect x="3" y="12.500" width="18" height="1.800" fill="#A83B1A"/></svg><svg style="left:1512.50px;top:152.00px;" width="15" height="15" viewBox="0 0 24 24"><circle cx="9" cy="6.500" r="3.200" fill="#555"/><path d="M4,20c0.500-5 2-8 5-8s4.500,3 5,8Z" fill="#555"/><rect x="3" y="19" width="12" height="2.500" fill="#444"/><path d="M14.500,3.500h6l-1.800,4.500 1.800,5.500h-6l1.500-5Z" fill="#8250DF"/></svg><svg style="left:1512.50px;top:180.00px;" width="15" height="15" viewBox="0 0 24 24"><defs><linearGradient id="m365" x1="0" y1="0" x2="1" y2="1"><stop offset="0" stop-color="#6A5AE0"/><stop offset="1" stop-color="#2F7BE8"/></linearGradient></defs><path d="M12,2.500L20.500,7.500V16.500L12,21.500 3.500,16.500V7.500Z" fill="none" stroke="url(#m365)" stroke-width="4.500" stroke-linejoin="round"/><path d="M12,2.500L3.500,7.500V12" fill="none" stroke="#9B5BE8" stroke-width="4.500" stroke-linejoin="round"/></svg><svg style="left:1512.50px;top:207.30px;" width="15" height="15" viewBox="0 0 24 24"><rect x="9" y="4.500" width="12.500" height="15" rx="1.500" fill="#2E7BD6"/><path d="M9,8l6.300,4.200L21.500,8" fill="none" stroke="#8EC2F5" stroke-width="1.300"/><rect x="2.500" y="6.500" width="11" height="11" rx="1.500" fill="#1460B8"/><circle cx="8" cy="12" r="3" fill="none" stroke="#fff" stroke-width="1.600"/></svg><svg style="left:1512.50px;top:235.50px;" width="15" height="15" viewBox="0 0 24 24"><path d="M2.500,9.500L21.500,4 15.500,20.500 11.500,14Z" fill="#3B82E6"/><path d="M11.500,14L21.500,4 11.500,12.500Z" fill="#1F5FC0"/><path d="M11.500,14v5l2.300-2.500Z" fill="#1F5FC0"/></svg><svg style="left:1512.50px;top:263.50px;" width="15" height="15" viewBox="0 0 24 24"><circle cx="17.500" cy="7" r="2.600" fill="#5B5FC7"/><path d="M14.500,10.500h7v6a3.500,3.500 0 0 1 -7,0Z" fill="#5B5FC7"/><circle cx="11" cy="5.800" r="3" fill="#7B83EB"/><path d="M6.500,10h10v7.500a5,5 0 0 1 -10,0Z" fill="#7B83EB"/><rect x="2" y="8" width="10.500" height="10.500" rx="1.300" fill="#4B53BC"/><path d="M4.800,10.800h5M7.300,10.800v5.500" stroke="#fff" stroke-width="1.500"/></svg><div style="left:1513.00px;top:293.50px;width:15.00px;height:1.00px;background:#D0D0D0;"></div><svg style="left:1514.50px;top:310.50px;" width="11" height="11" viewBox="0 0 24 24"><path d="M12,3V21M3,12H21" fill="none" stroke="#333" stroke-width="1.8" stroke-linecap="round" stroke-linejoin="round"/></svg><div style="left:1513.00px;top:834.00px;width:15.00px;height:1.00px;background:#D0D0D0;"></div><svg style="left:1513.75px;top:843.75px;" width="12.5" height="12.5" viewBox="0 0 24 24"><path d="M21.86,10.31 L21.86,13.69 L19.40,13.73 L18.46,16.01 L20.17,17.77 L17.77,20.17 L16.01,18.46 L13.73,19.40 L13.69,21.86 L10.31,21.86 L10.27,19.40 L7.99,18.46 L6.23,20.17 L3.83,17.77 L5.54,16.01 L4.60,13.73 L2.14,13.69 L2.14,10.31 L4.60,10.27 L5.54,7.99 L3.83,6.23 L6.23,3.83 L7.99,5.54 L10.27,4.60 L10.31,2.14 L13.69,2.14 L13.73,4.60 L16.01,5.54 L17.77,3.83 L20.17,6.23 L18.46,7.99 L19.40,10.27Z" fill="none" stroke="#333" stroke-width="1.7" stroke-linecap="round" stroke-linejoin="round"/><circle cx="12" cy="12" r="3.300" fill="none" stroke="#333" stroke-width="1.7" stroke-linecap="round" stroke-linejoin="round"/></svg></div></div>
</body></html>
